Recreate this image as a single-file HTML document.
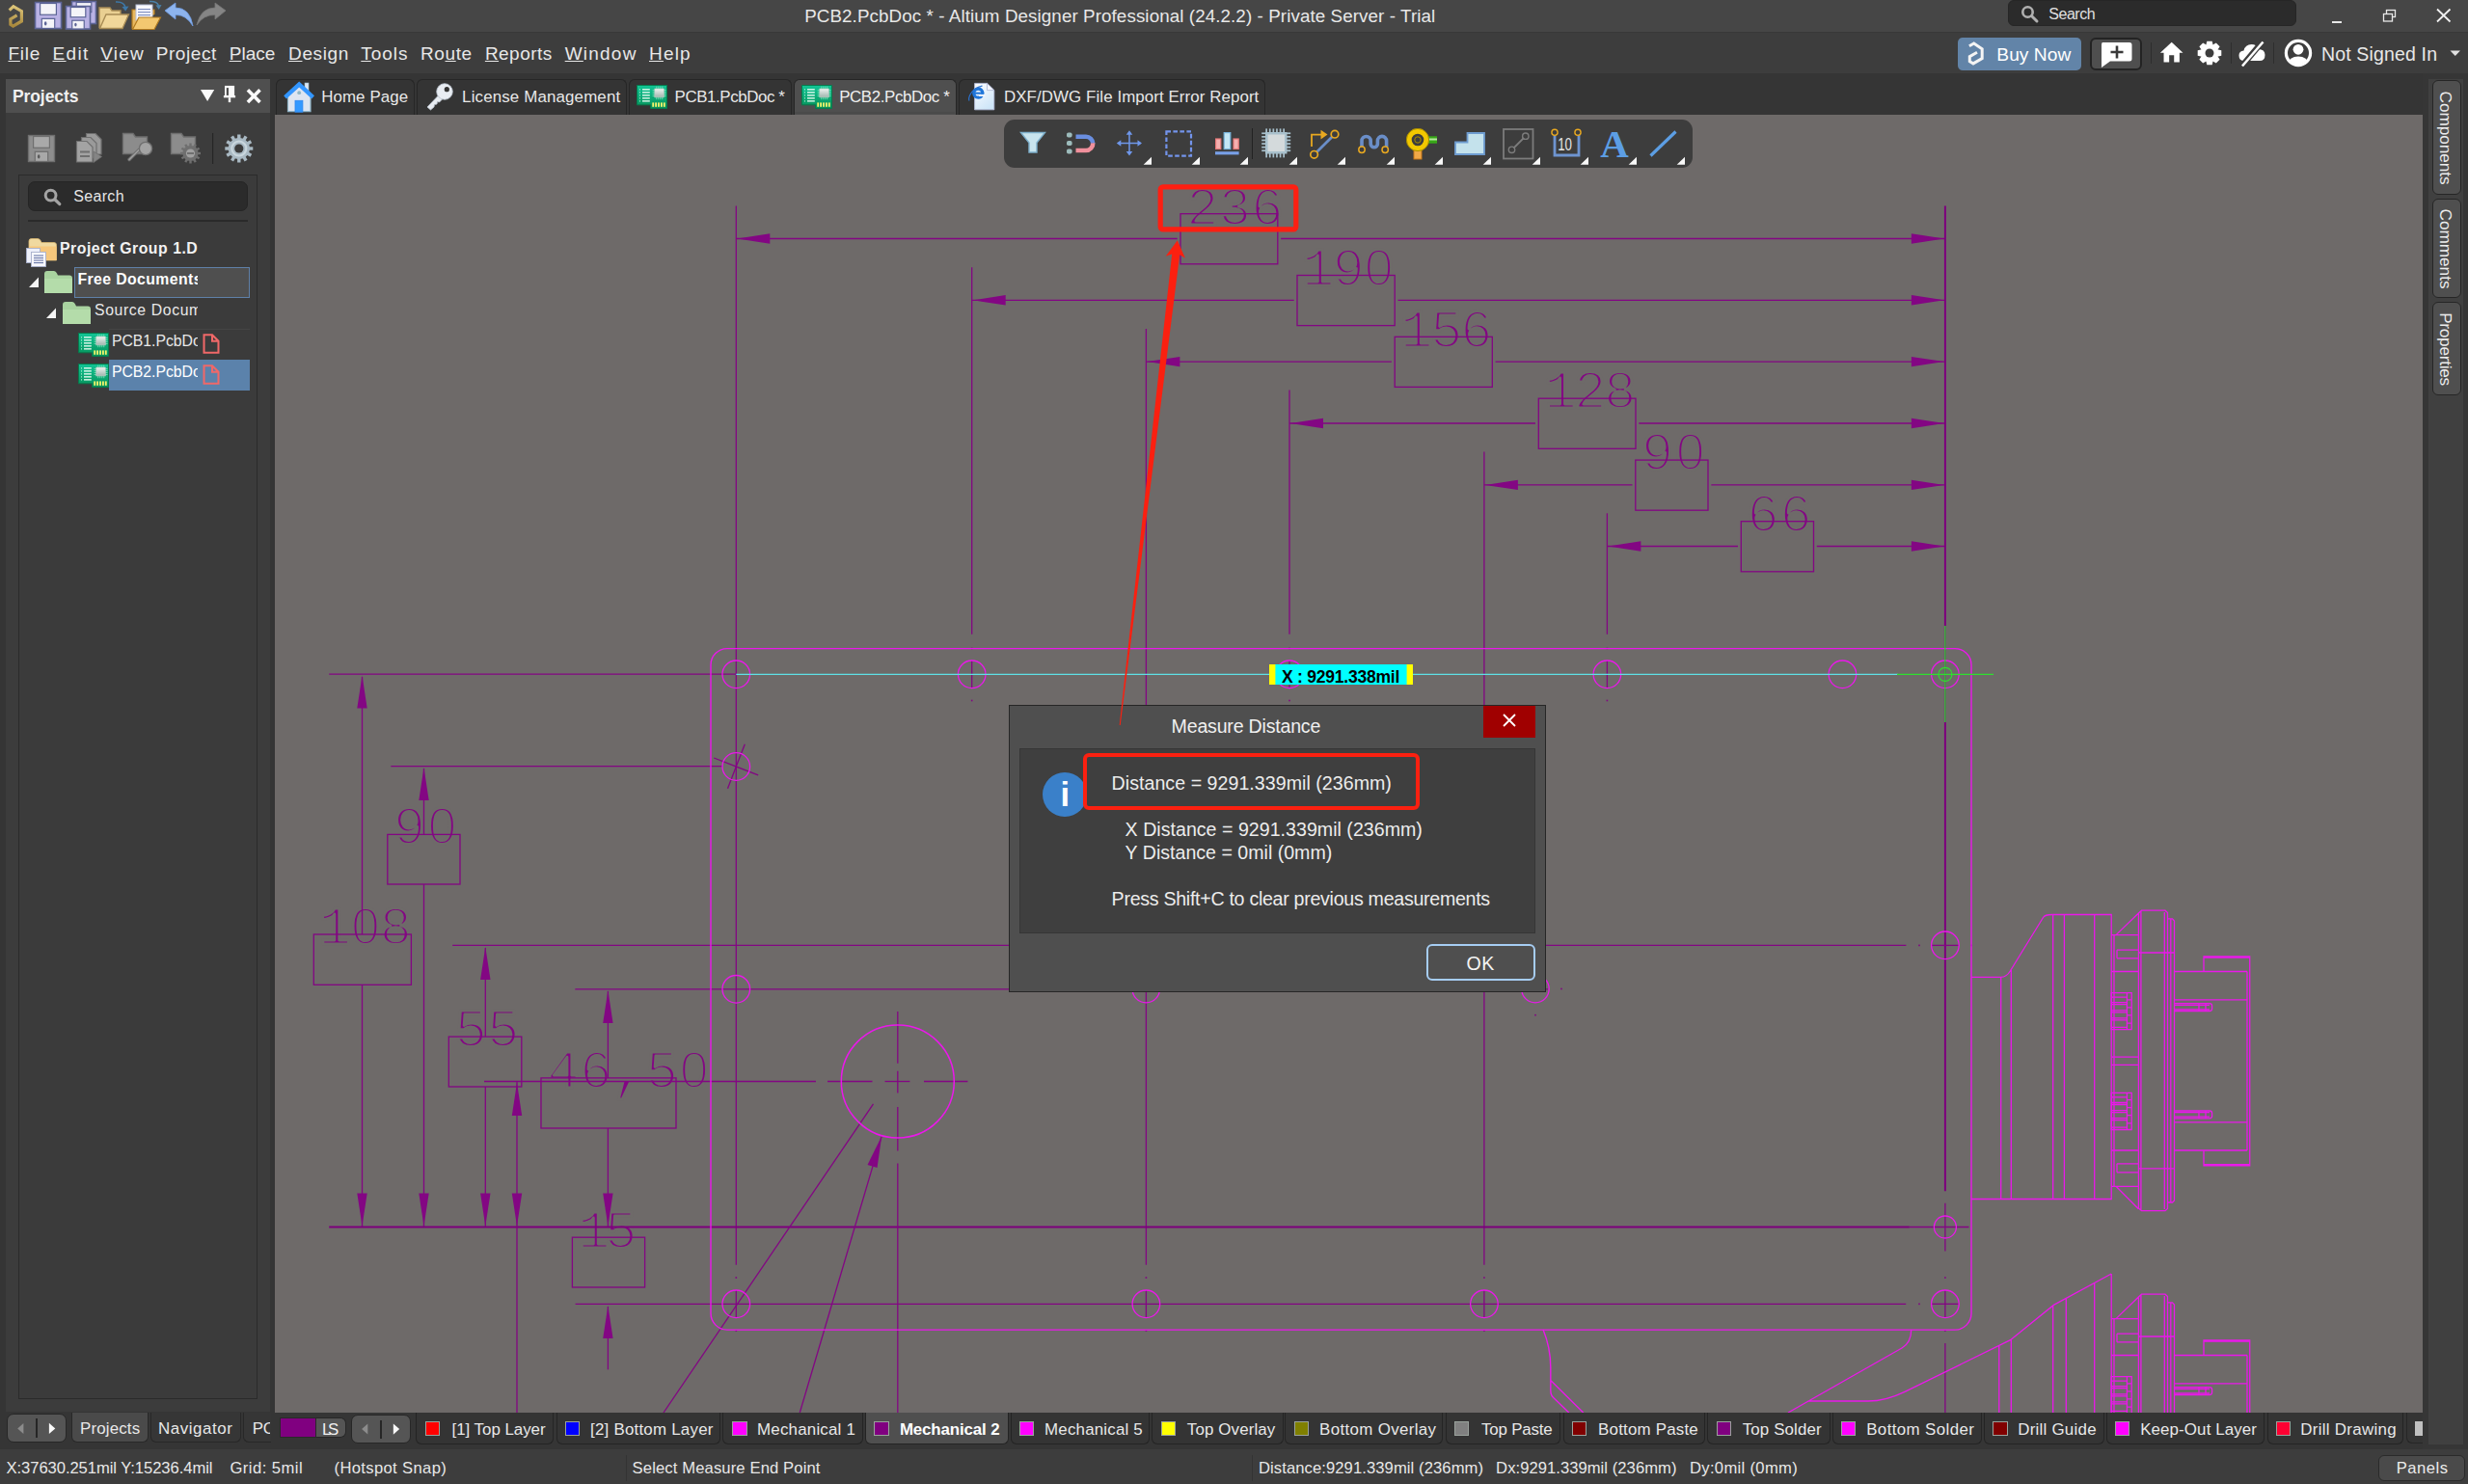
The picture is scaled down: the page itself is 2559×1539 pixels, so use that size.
<!DOCTYPE html>
<html><head><meta charset="utf-8"><title>PCB2.PcbDoc * - Altium Designer Professional (24.2.2)</title>
<style>
html,body{margin:0;padding:0;overflow:hidden}
body{width:2559px;height:1539px;position:relative;overflow:hidden;background:#353535;font-family:"Liberation Sans",sans-serif;-webkit-font-smoothing:antialiased}
div{box-sizing:border-box}
</style></head><body>
<div style="position:absolute;left:0;top:0;width:2559px;height:33px;background:#464646"></div>
<div style="position:absolute;left:0;top:33px;width:2559px;height:1px;background:#383838"></div>
<div style="position:absolute;left:0;top:34px;width:2559px;height:42px;background:#3d3d3d"></div>
<div style="position:absolute;left:0;top:76px;width:2559px;height:43px;background:#353535"></div>
<svg style="position:absolute;left:0;top:0" width="260" height="34" viewBox="0 0 260 34"><defs><linearGradient id="alg" x1="0" y1="0" x2="0" y2="1"><stop offset="0" stop-color="#dcc478"/><stop offset="1" stop-color="#a8883c"/></linearGradient></defs><path d="M9.7 10.7 L13.9 6.7 L22.4 11.7 V22 L13.6 27.1 L10.9 25.4 V19.9 L17.6 15.9" fill="none" stroke="url(#alg)" stroke-width="3.2" stroke-linejoin="miter"/><rect x="36.5" y="2.5" width="27" height="27" fill="#b9b2e4" stroke="#5c6496" stroke-width="1.6"/><rect x="41.6" y="3.5" width="16.8" height="11.76" fill="#f4f4f8" stroke="#5c6496" stroke-width="1.2"/><rect x="43.28" y="19.36" width="13.44" height="10.08" fill="#f4f4f8" stroke="#5c6496" stroke-width="1.2"/><ellipse cx="47.2" cy="24.400000000000002" rx="1.26" ry="2.1" fill="#5c6496"/><rect x="74.5" y="1.5" width="25" height="23" fill="#b9b2e4" stroke="#5c6496" stroke-width="1.6"/><rect x="79.2" y="2.5" width="15.6" height="10.08" fill="#f4f4f8" stroke="#5c6496" stroke-width="1.2"/><rect x="80.76" y="15.879999999999999" width="12.48" height="8.64" fill="#f4f4f8" stroke="#5c6496" stroke-width="1.2"/><ellipse cx="84.4" cy="20.200000000000003" rx="1.17" ry="1.7999999999999998" fill="#5c6496"/><rect x="68.5" y="6.5" width="25" height="23.5" fill="#b9b2e4" stroke="#5c6496" stroke-width="1.6"/><rect x="73.2" y="7.5" width="15.6" height="10.29" fill="#f4f4f8" stroke="#5c6496" stroke-width="1.2"/><rect x="74.76" y="21.189999999999998" width="12.48" height="8.82" fill="#f4f4f8" stroke="#5c6496" stroke-width="1.2"/><ellipse cx="78.4" cy="25.6" rx="1.17" ry="1.8375" fill="#5c6496"/><path d="M103 29 V8 H114 L116 11 H125 V15" fill="#e9cf92" stroke="#a88c55" stroke-width="1.4"/><path d="M103.5 29.5 L110 15 H133.5 L127 29.5 Z" fill="#f1d79a" stroke="#a88c55" stroke-width="1.4"/><path d="M120 2 Q129 1.5 130 8" fill="none" stroke="#3d78a8" stroke-width="1.6"/><path d="M126.5 7 L130.2 11.5 L133.5 6.5 Z" fill="#3d78a8"/><path d="M137 30 V10 H160 V15" fill="#e8b860" stroke="#b07a20" stroke-width="1.2"/><rect x="141" y="5" width="17" height="16" fill="#fafaff" stroke="#b8c0d8" stroke-width="1"/><rect x="143" y="9" width="13" height="1.2" fill="#8090c0"/><rect x="143" y="12" width="13" height="1.2" fill="#8090c0"/><rect x="143" y="15" width="13" height="1.2" fill="#8090c0"/><path d="M137.5 30.5 L144 18 H166.5 L160 30.5 Z" fill="#f3c870" stroke="#b07a20" stroke-width="1.2"/><path d="M155 1.5 Q163 1 164.5 6" fill="none" stroke="#4a80a8" stroke-width="1.4"/><path d="M161.5 5.5 L164.8 10 L167.5 5 Z" fill="#4a80a8"/><path d="M171 11 L182 3 V8 Q197 8 200 27 Q193 15 182 15.5 V20 Z" fill="#8db4ee" stroke="#6f9ae0" stroke-width="0.8"/><path d="M234 11 L223 3 V8 Q208 8 204 26 Q211 15 223 15.5 V20 Z" fill="#858585" stroke="#777" stroke-width="0.8"/></svg>
<div style="position:absolute;left:834.2px;top:5.1px;font-size:18.8px;line-height:24px;letter-spacing:0.09px;color:#e8e8e8;white-space:pre;">PCB2.PcbDoc * - Altium Designer Professional (24.2.2) - Private Server - Trial</div>
<div style="position:absolute;left:2082px;top:0px;width:299px;height:27px;background:#2b2b2b;border:1px solid #262626;box-sizing:border-box;border-radius:6px"></div>
<svg style="position:absolute;left:2094px;top:4px" width="22" height="22" viewBox="0 0 22 22"><circle cx="8.5" cy="8.5" r="5.2" fill="none" stroke="#b0b0b0" stroke-width="2.6"/><path d="M12.5 12.5 L18 18" stroke="#b0b0b0" stroke-width="3" stroke-linecap="round"/></svg>
<div style="position:absolute;left:2124.2px;top:4.4px;font-size:16px;line-height:21px;letter-spacing:-0.43px;color:#e0e0e0;white-space:pre;">Search</div>
<div style="position:absolute;left:2418px;top:22px;width:10px;height:1.5px;background:#e8e8e8"></div>
<svg style="position:absolute;left:2468px;top:7px" width="20" height="20" viewBox="0 0 20 20"><rect x="6.5" y="3.5" width="9" height="7" fill="none" stroke="#e8e8e8" stroke-width="1.3"/><rect x="3.5" y="7.5" width="9" height="7.5" fill="#464646" stroke="#e8e8e8" stroke-width="1.3"/></svg>
<svg style="position:absolute;left:2524px;top:6px" width="20" height="20" viewBox="0 0 20 20"><path d="M3 3.5 L16.5 16.5 M16.5 3.5 L3 16.5" stroke="#f0f0f0" stroke-width="1.8"/></svg>
<div style="position:absolute;left:8.5px;top:43.1px;font-size:19px;line-height:25px;letter-spacing:0.75px;color:#e8e8e8;white-space:pre;text-underline-offset:1.2px;text-decoration-thickness:1.4px;"><u>F</u>ile</div>
<div style="position:absolute;left:54.5px;top:43.1px;font-size:19px;line-height:25px;letter-spacing:1.37px;color:#e8e8e8;white-space:pre;text-underline-offset:1.2px;text-decoration-thickness:1.4px;"><u>E</u>dit</div>
<div style="position:absolute;left:104.3px;top:43.1px;font-size:19px;line-height:25px;letter-spacing:1.21px;color:#e8e8e8;white-space:pre;text-underline-offset:1.2px;text-decoration-thickness:1.4px;"><u>V</u>iew</div>
<div style="position:absolute;left:161.7px;top:43.1px;font-size:19px;line-height:25px;letter-spacing:0.59px;color:#e8e8e8;white-space:pre;text-underline-offset:1.2px;text-decoration-thickness:1.4px;">Proje<u>c</u>t</div>
<div style="position:absolute;left:237.7px;top:43.1px;font-size:19px;line-height:25px;letter-spacing:0.03px;color:#e8e8e8;white-space:pre;text-underline-offset:1.2px;text-decoration-thickness:1.4px;"><u>P</u>lace</div>
<div style="position:absolute;left:299.1px;top:43.1px;font-size:19px;line-height:25px;letter-spacing:0.62px;color:#e8e8e8;white-space:pre;text-underline-offset:1.2px;text-decoration-thickness:1.4px;"><u>D</u>esign</div>
<div style="position:absolute;left:374.3px;top:43.1px;font-size:19px;line-height:25px;letter-spacing:0.93px;color:#e8e8e8;white-space:pre;text-underline-offset:1.2px;text-decoration-thickness:1.4px;"><u>T</u>ools</div>
<div style="position:absolute;left:436.0px;top:43.1px;font-size:19px;line-height:25px;letter-spacing:0.61px;color:#e8e8e8;white-space:pre;text-underline-offset:1.2px;text-decoration-thickness:1.4px;">Ro<u>u</u>te</div>
<div style="position:absolute;left:502.9px;top:43.1px;font-size:19px;line-height:25px;letter-spacing:0.46px;color:#e8e8e8;white-space:pre;text-underline-offset:1.2px;text-decoration-thickness:1.4px;"><u>R</u>eports</div>
<div style="position:absolute;left:585.7px;top:43.1px;font-size:19px;line-height:25px;letter-spacing:1.22px;color:#e8e8e8;white-space:pre;text-underline-offset:1.2px;text-decoration-thickness:1.4px;"><u>W</u>indow</div>
<div style="position:absolute;left:673.0px;top:43.1px;font-size:19px;line-height:25px;letter-spacing:1.19px;color:#e8e8e8;white-space:pre;text-underline-offset:1.2px;text-decoration-thickness:1.4px;"><u>H</u>elp</div>
<div style="position:absolute;left:2030px;top:39px;width:128px;height:34px;background:#6284a8;border-radius:5px"></div>
<svg style="position:absolute;left:2038px;top:43px" width="22" height="26" viewBox="0 0 22 26"><path d="M3.9 4.8 L8.7 2 L17.2 7.7 V17.6 L8 22.9 L4.3 20.7 V15.6 L12 11.2" fill="none" stroke="#f4f4f4" stroke-width="3"/></svg>
<div style="position:absolute;left:2070.3px;top:44.1px;font-size:19.2px;line-height:25px;letter-spacing:0.04px;color:#ffffff;white-space:pre;">Buy Now</div>
<div style="position:absolute;left:2167px;top:39px;width:54px;height:34px;background:#4f4f4f;border:2px solid #232323;box-sizing:border-box;border-radius:6px"></div>
<svg style="position:absolute;left:2176px;top:42px" width="38" height="30" viewBox="0 0 38 30"><path d="M4 2 H32 Q34.5 2 34.5 4.5 V19 Q34.5 21.5 32 21.5 H12 L3 28 V4.5 Q3 2 4 2 Z" fill="#ffffff"/><path d="M12.5 12 H25.5 M19 5.5 V18.5" stroke="#3a3a3a" stroke-width="2.6"/></svg>
<div style="position:absolute;left:2230px;top:44px;width:1px;height:22px;background:#2e2e2e"></div>
<div style="position:absolute;left:2313px;top:44px;width:1px;height:22px;background:#2e2e2e"></div>
<div style="position:absolute;left:2357px;top:44px;width:1px;height:22px;background:#2e2e2e"></div>
<svg style="position:absolute;left:2239.4px;top:42.4px" width="25.4" height="24.4" viewBox="0 0 28 26"><path d="M14 1.5 L27 13.5 H23 V24.5 H16.8 V16.5 H11.2 V24.5 H5 V13.5 H1 Z" fill="#ffffff"/></svg>
<svg style="position:absolute;left:2277px;top:41px" width="28" height="28" viewBox="-14 -14 28 28"><path d="M-2.7 -12.3 H2.7 L3.9 -7 H-3.9 Z" fill="#fff" transform="rotate(0)"/><path d="M-2.7 -12.3 H2.7 L3.9 -7 H-3.9 Z" fill="#fff" transform="rotate(45)"/><path d="M-2.7 -12.3 H2.7 L3.9 -7 H-3.9 Z" fill="#fff" transform="rotate(90)"/><path d="M-2.7 -12.3 H2.7 L3.9 -7 H-3.9 Z" fill="#fff" transform="rotate(135)"/><path d="M-2.7 -12.3 H2.7 L3.9 -7 H-3.9 Z" fill="#fff" transform="rotate(180)"/><path d="M-2.7 -12.3 H2.7 L3.9 -7 H-3.9 Z" fill="#fff" transform="rotate(225)"/><path d="M-2.7 -12.3 H2.7 L3.9 -7 H-3.9 Z" fill="#fff" transform="rotate(270)"/><path d="M-2.7 -12.3 H2.7 L3.9 -7 H-3.9 Z" fill="#fff" transform="rotate(315)"/><circle r="8.9" fill="#fff"/><circle r="4.5" fill="#3d3d3d"/></svg>
<svg style="position:absolute;left:2319px;top:41px" width="32" height="30" viewBox="0 0 32 30"><path d="M8 22 Q2.5 22 2.5 16.5 Q2.5 12 7.5 11.5 Q9 5 15.5 5 Q21 5 22.5 10 Q29.5 10 29.5 16 Q29.5 22 24 22 Z" fill="#fff"/><path d="M27 2 L6 27" stroke="#3d3d3d" stroke-width="6"/><path d="M27.5 2.5 L6 27.5" stroke="#fff" stroke-width="2.6"/></svg>
<svg style="position:absolute;left:2368px;top:40px" width="30" height="30" viewBox="0 0 30 30"><defs><clipPath id="acc"><circle cx="15" cy="15" r="11.6"/></clipPath></defs><circle cx="15" cy="15" r="12.6" fill="none" stroke="#fff" stroke-width="3.2"/><circle cx="15" cy="11.3" r="5.4" fill="#fff"/><ellipse cx="15" cy="26.5" rx="10.8" ry="8" fill="#fff" clip-path="url(#acc)"/></svg>
<div style="position:absolute;left:2406.9px;top:44.0px;font-size:19.5px;line-height:25px;letter-spacing:0.16px;color:#e8e8e8;white-space:pre;">Not Signed In</div>
<svg style="position:absolute;left:2540px;top:52px" width="12" height="7" viewBox="0 0 12 7"><path d="M0.5 0.5 H11 L5.75 6 Z" fill="#e0e0e0"/></svg>
<div style="position:absolute;left:286px;top:82px;width:144px;height:37px;background:#343434;border:1.5px solid #262626;border-bottom:none;box-sizing:border-box;border-radius:6px 6px 0 0"></div>
<div style="position:absolute;left:432px;top:82px;width:218px;height:37px;background:#343434;border:1.5px solid #262626;border-bottom:none;box-sizing:border-box;border-radius:6px 6px 0 0"></div>
<div style="position:absolute;left:652px;top:82px;width:169px;height:37px;background:#343434;border:1.5px solid #262626;border-bottom:none;box-sizing:border-box;border-radius:6px 6px 0 0"></div>
<div style="position:absolute;left:823px;top:82px;width:169px;height:37px;background:#4f4f4f;border:1.5px solid #262626;border-bottom:none;box-sizing:border-box;border-radius:6px 6px 0 0"></div>
<div style="position:absolute;left:994px;top:82px;width:318px;height:37px;background:#343434;border:1.5px solid #262626;border-bottom:none;box-sizing:border-box;border-radius:6px 6px 0 0"></div>
<div style="position:absolute;left:824px;top:116px;width:166px;height:2px;background:#4a4a4a"></div>
<svg style="position:absolute;left:293px;top:84px" width="34" height="34" viewBox="0 0 34 34"><rect x="23" y="2" width="4" height="10" fill="#dbe6f2" stroke="#9bbccc" stroke-width="0.6"/><path d="M5.5 15 V31.6 H29 V15 L17.2 5 Z" fill="#dde5f1" stroke="#8fb3c6" stroke-width="1.2"/><circle cx="17.2" cy="12.2" r="1.9" fill="#8fb6c6"/><rect x="13" y="20.3" width="7.9" height="11.9" fill="#3399ff" stroke="#2f86ee" stroke-width="0.8"/><path d="M1.2 15.2 L17.2 0.6 L33 15.2 L30.2 18.6 L17.2 6.6 L4 18.6 Z" fill="#3396ff"/></svg>
<div style="position:absolute;left:333.2px;top:90.2px;font-size:16.9px;line-height:22px;letter-spacing:0.09px;color:#e8e8e8;white-space:pre;">Home Page</div>
<svg style="position:absolute;left:440px;top:85px" width="32" height="32" viewBox="0 0 32 32"><path d="M3 26 L15 13.5 L19 17.5 L15.5 21 L13.5 20.5 L13 23 L10.5 23.5 L10 26 L6.5 29 Z" fill="#e8ecf2" stroke="#b8c0cc" stroke-width="0.8"/><circle cx="21" cy="10" r="8.3" fill="#e8ecf2" stroke="#b8c0cc" stroke-width="0.8"/><circle cx="23.3" cy="7.7" r="2.6" fill="#343434"/></svg>
<div style="position:absolute;left:479.1px;top:90.2px;font-size:16.9px;line-height:22px;letter-spacing:0.15px;color:#e8e8e8;white-space:pre;">License Management</div>
<svg style="position:absolute;left:660px;top:88px" width="33" height="26" viewBox="0 0 33 26"><defs><linearGradient id="pg1" x1="0" y1="0" x2="0" y2="1"><stop offset="0" stop-color="#12c596"/><stop offset="1" stop-color="#069058"/></linearGradient><linearGradient id="cg1" x1="0" y1="0" x2="0" y2="1"><stop offset="0" stop-color="#eef2f0"/><stop offset="1" stop-color="#9fb5ae"/></linearGradient></defs><path d="M0.5 0.5 H31.5 V24.5 H14.6 V20.8 H0.5 Z" fill="url(#pg1)" stroke="#067a4c" stroke-width="1"/><rect x="6" y="4.2" width="7.8" height="1.3" fill="#f2fff8"/><rect x="3" y="4.4" width="1" height="1" fill="#d8ffe8"/><rect x="6" y="7.2" width="7.8" height="1.3" fill="#f2fff8"/><rect x="3" y="7.4" width="1" height="1" fill="#d8ffe8"/><rect x="6" y="10.2" width="7.8" height="1.3" fill="#f2fff8"/><rect x="3" y="10.4" width="1" height="1" fill="#d8ffe8"/><rect x="6" y="13.2" width="7.8" height="1.3" fill="#f2fff8"/><rect x="3" y="13.4" width="1" height="1" fill="#d8ffe8"/><rect x="6" y="16.2" width="7.8" height="1.3" fill="#f2fff8"/><rect x="3" y="16.4" width="1" height="1" fill="#d8ffe8"/><rect x="20.4" y="1.6" width="0.8" height="13.6" fill="#7fe0b8"/><rect x="16.6" y="5" width="14" height="0.8" fill="#7fe0b8"/><rect x="22.4" y="1.6" width="0.8" height="13.6" fill="#7fe0b8"/><rect x="16.6" y="7" width="14" height="0.8" fill="#7fe0b8"/><rect x="24.4" y="1.6" width="0.8" height="13.6" fill="#7fe0b8"/><rect x="16.6" y="9" width="14" height="0.8" fill="#7fe0b8"/><rect x="26.4" y="1.6" width="0.8" height="13.6" fill="#7fe0b8"/><rect x="16.6" y="11" width="14" height="0.8" fill="#7fe0b8"/><rect x="18.8" y="4" width="9.5" height="8.9" fill="url(#cg1)" stroke="#b8ccc4" stroke-width="0.6"/><rect x="16.3" y="18.4" width="1.8" height="4.4" fill="#f6f66c"/><rect x="19.2" y="18.4" width="1.8" height="4.4" fill="#f6f66c"/><rect x="22.1" y="18.4" width="1.8" height="4.4" fill="#f6f66c"/><rect x="25.0" y="18.4" width="1.8" height="4.4" fill="#f6f66c"/><rect x="27.9" y="18.4" width="1.8" height="4.4" fill="#f6f66c"/></svg>
<div style="position:absolute;left:699.6px;top:90.2px;font-size:16.9px;line-height:22px;letter-spacing:-0.42px;color:#e8e8e8;white-space:pre;">PCB1.PcbDoc *</div>
<svg style="position:absolute;left:831px;top:88px" width="33" height="26" viewBox="0 0 33 26"><defs><linearGradient id="pg2" x1="0" y1="0" x2="0" y2="1"><stop offset="0" stop-color="#12c596"/><stop offset="1" stop-color="#069058"/></linearGradient><linearGradient id="cg2" x1="0" y1="0" x2="0" y2="1"><stop offset="0" stop-color="#eef2f0"/><stop offset="1" stop-color="#9fb5ae"/></linearGradient></defs><path d="M0.5 0.5 H31.5 V24.5 H14.6 V20.8 H0.5 Z" fill="url(#pg2)" stroke="#067a4c" stroke-width="1"/><rect x="6" y="4.2" width="7.8" height="1.3" fill="#f2fff8"/><rect x="3" y="4.4" width="1" height="1" fill="#d8ffe8"/><rect x="6" y="7.2" width="7.8" height="1.3" fill="#f2fff8"/><rect x="3" y="7.4" width="1" height="1" fill="#d8ffe8"/><rect x="6" y="10.2" width="7.8" height="1.3" fill="#f2fff8"/><rect x="3" y="10.4" width="1" height="1" fill="#d8ffe8"/><rect x="6" y="13.2" width="7.8" height="1.3" fill="#f2fff8"/><rect x="3" y="13.4" width="1" height="1" fill="#d8ffe8"/><rect x="6" y="16.2" width="7.8" height="1.3" fill="#f2fff8"/><rect x="3" y="16.4" width="1" height="1" fill="#d8ffe8"/><rect x="20.4" y="1.6" width="0.8" height="13.6" fill="#7fe0b8"/><rect x="16.6" y="5" width="14" height="0.8" fill="#7fe0b8"/><rect x="22.4" y="1.6" width="0.8" height="13.6" fill="#7fe0b8"/><rect x="16.6" y="7" width="14" height="0.8" fill="#7fe0b8"/><rect x="24.4" y="1.6" width="0.8" height="13.6" fill="#7fe0b8"/><rect x="16.6" y="9" width="14" height="0.8" fill="#7fe0b8"/><rect x="26.4" y="1.6" width="0.8" height="13.6" fill="#7fe0b8"/><rect x="16.6" y="11" width="14" height="0.8" fill="#7fe0b8"/><rect x="18.8" y="4" width="9.5" height="8.9" fill="url(#cg2)" stroke="#b8ccc4" stroke-width="0.6"/><rect x="16.3" y="18.4" width="1.8" height="4.4" fill="#f6f66c"/><rect x="19.2" y="18.4" width="1.8" height="4.4" fill="#f6f66c"/><rect x="22.1" y="18.4" width="1.8" height="4.4" fill="#f6f66c"/><rect x="25.0" y="18.4" width="1.8" height="4.4" fill="#f6f66c"/><rect x="27.9" y="18.4" width="1.8" height="4.4" fill="#f6f66c"/></svg>
<div style="position:absolute;left:870.2px;top:90.2px;font-size:16.9px;line-height:22px;letter-spacing:-0.39px;color:#f0f0f0;white-space:pre;">PCB2.PcbDoc *</div>
<svg style="position:absolute;left:1004px;top:84px" width="30" height="32" viewBox="0 0 30 32"><defs><linearGradient id="dxg" x1="0" y1="0" x2="0.6" y2="1"><stop offset="0" stop-color="#fdfdff"/><stop offset="1" stop-color="#cfe6f8"/></linearGradient></defs><path d="M6.6 2.4 H19.5 L26.8 9.6 V29.8 H6.6 Z" fill="url(#dxg)" stroke="#b4bcd8" stroke-width="0.9"/><path d="M19.5 2.4 V9.6 H26.8 Z" fill="#f4f6ff" stroke="#b4bcd8" stroke-width="0.9"/><circle cx="10.3" cy="12.7" r="4.5" fill="none" stroke="#1f76da" stroke-width="3.3"/><rect x="11" y="13.6" width="6.2" height="2.3" fill="#f2f6fd"/><rect x="5.6" y="11.6" width="10.6" height="2.1" fill="#1f76da"/><path d="M1 20.5 Q-0.5 17 4 11 Q8 6 14.5 5.2" fill="none" stroke="#2a72d0" stroke-width="1.2"/></svg>
<div style="position:absolute;left:1041.0px;top:90.2px;font-size:16.9px;line-height:22px;letter-spacing:0.08px;color:#e8e8e8;white-space:pre;">DXF/DWG File Import Error Report</div>
<div style="position:absolute;left:6px;top:82px;width:274px;height:1382px;background:#3c3c3c"></div>
<div style="position:absolute;left:0;top:76px;width:6px;height:1388px;background:#353535"></div>
<div style="position:absolute;left:6px;top:82px;width:274px;height:35px;background:#4f4f4f"></div>
<div style="position:absolute;left:12.9px;top:88.5px;font-size:17.5px;line-height:23px;letter-spacing:-0.07px;color:#f0f0f0;white-space:pre;font-weight:700;">Projects</div>
<svg style="position:absolute;left:205px;top:86px" width="70" height="24" viewBox="0 0 70 24"><path d="M3 7 H17.2 L10.1 18.9 Z" fill="#fafafa"/><rect x="28" y="2.9" width="10.1" height="10.2" fill="#fafafa"/><rect x="29.8" y="5.1" width="2.2" height="7.8" fill="#4f4f4f"/><rect x="26.9" y="13" width="12.2" height="2.3" fill="#fafafa"/><rect x="31.8" y="15.2" width="2.4" height="4.9" fill="#fafafa"/><path d="M51.9 7.3 L64.5 19.9 M64.5 7.3 L51.9 19.9" stroke="#fafafa" stroke-width="3.6"/></svg>
<svg style="position:absolute;left:20px;top:132px" width="250" height="44" viewBox="20 132 250 44"><rect x="29.5" y="140.5" width="27" height="27" fill="#8e8e8e" stroke="#6f6f6f" stroke-width="1.4"/><rect x="34.6" y="141.5" width="16.8" height="11.76" fill="#a9a9a9" stroke="#6f6f6f" stroke-width="1.2"/><rect x="36.28" y="157.36" width="13.44" height="10.08" fill="#a9a9a9" stroke="#6f6f6f" stroke-width="1.2"/><ellipse cx="40.2" cy="162.4" rx="1.26" ry="2.1" fill="#5a5a5a"/><path d="M89.5 138.5 H99 L105 144.5 V160 H89.5 Z" fill="#9a9a9a" stroke="#6f6f6f" stroke-width="1.2"/><path d="M84.5 142.5 H94 L100 148.5 V164 H84.5 Z" fill="#9a9a9a" stroke="#6f6f6f" stroke-width="1.2"/><path d="M79.5 146.5 H90 L96 152.5 V168 H79.5 Z" fill="#a3a3a3" stroke="#6f6f6f" stroke-width="1.2"/><rect x="83" y="156.5" width="10" height="2" fill="#6f6f6f"/><rect x="83" y="161" width="10" height="2" fill="#6f6f6f"/><path d="M97 157 L105.5 162.5 L97 168.5 Z" fill="#858585" stroke="#6f6f6f" stroke-width="0.8"/><path d="M127.5 159.5 V138.5 H138 L140.5 142 H152.5 V159.5 Z" fill="#8c8c8c" stroke="#6f6f6f" stroke-width="1.4"/><path d="M134 165.5 L144 155.5" stroke="#6f6f6f" stroke-width="3.4" stroke-linecap="round"/><path d="M134 165.5 L144 155.5" stroke="#a0a0a0" stroke-width="1.4" stroke-linecap="round"/><circle cx="151" cy="154" r="6.6" fill="#a3a3a3" stroke="#6f6f6f" stroke-width="1.4"/><path d="M177.5 159.5 V138.5 H188 L190.5 142 H202.5 V159.5 Z" fill="#8c8c8c" stroke="#6f6f6f" stroke-width="1.4"/><g transform="translate(197.5 159)"><rect x="-1.2" y="-10.5" width="2.4" height="4" fill="#6f6f6f" transform="rotate(0.0)"/><rect x="-1.2" y="-10.5" width="2.4" height="4" fill="#6f6f6f" transform="rotate(30.0)"/><rect x="-1.2" y="-10.5" width="2.4" height="4" fill="#6f6f6f" transform="rotate(60.0)"/><rect x="-1.2" y="-10.5" width="2.4" height="4" fill="#6f6f6f" transform="rotate(90.0)"/><rect x="-1.2" y="-10.5" width="2.4" height="4" fill="#6f6f6f" transform="rotate(120.0)"/><rect x="-1.2" y="-10.5" width="2.4" height="4" fill="#6f6f6f" transform="rotate(150.0)"/><rect x="-1.2" y="-10.5" width="2.4" height="4" fill="#6f6f6f" transform="rotate(180.0)"/><rect x="-1.2" y="-10.5" width="2.4" height="4" fill="#6f6f6f" transform="rotate(210.0)"/><rect x="-1.2" y="-10.5" width="2.4" height="4" fill="#6f6f6f" transform="rotate(240.0)"/><rect x="-1.2" y="-10.5" width="2.4" height="4" fill="#6f6f6f" transform="rotate(270.0)"/><rect x="-1.2" y="-10.5" width="2.4" height="4" fill="#6f6f6f" transform="rotate(300.0)"/><rect x="-1.2" y="-10.5" width="2.4" height="4" fill="#6f6f6f" transform="rotate(330.0)"/><circle r="8.1" fill="#6f6f6f"/><circle r="4.6" fill="#a0a0a0"/></g><rect x="194" y="158" width="7" height="2" fill="#6f6f6f"/><rect x="220" y="138" width="1.2" height="32" fill="#262626"/><g transform="translate(247.8 154)"><rect x="-1.7" y="-14.5" width="3.4" height="5" fill="#a9b9c3" transform="rotate(0.0)"/><rect x="-1.7" y="-14.5" width="3.4" height="5" fill="#a9b9c3" transform="rotate(30.0)"/><rect x="-1.7" y="-14.5" width="3.4" height="5" fill="#a9b9c3" transform="rotate(60.0)"/><rect x="-1.7" y="-14.5" width="3.4" height="5" fill="#a9b9c3" transform="rotate(90.0)"/><rect x="-1.7" y="-14.5" width="3.4" height="5" fill="#a9b9c3" transform="rotate(120.0)"/><rect x="-1.7" y="-14.5" width="3.4" height="5" fill="#a9b9c3" transform="rotate(150.0)"/><rect x="-1.7" y="-14.5" width="3.4" height="5" fill="#a9b9c3" transform="rotate(180.0)"/><rect x="-1.7" y="-14.5" width="3.4" height="5" fill="#a9b9c3" transform="rotate(210.0)"/><rect x="-1.7" y="-14.5" width="3.4" height="5" fill="#a9b9c3" transform="rotate(240.0)"/><rect x="-1.7" y="-14.5" width="3.4" height="5" fill="#a9b9c3" transform="rotate(270.0)"/><rect x="-1.7" y="-14.5" width="3.4" height="5" fill="#a9b9c3" transform="rotate(300.0)"/><rect x="-1.7" y="-14.5" width="3.4" height="5" fill="#a9b9c3" transform="rotate(330.0)"/><circle r="11.1" fill="#a9b9c3"/><circle r="4.6" fill="#3c3c3c"/></g><circle cx="247.8" cy="154" r="7.5" fill="none" stroke="#c9d6dd" stroke-width="2.2"/></svg>
<div style="position:absolute;left:19px;top:181px;width:248px;height:1270px;border:1.5px solid #2b2b2b;box-sizing:border-box;background:#3b3b3b"></div>
<div style="position:absolute;left:29px;top:188px;width:228px;height:31px;background:#2b2b2b;border:1.5px solid #252525;box-sizing:border-box;border-radius:7px"></div>
<svg style="position:absolute;left:44px;top:194px" width="22" height="22" viewBox="0 0 22 22"><circle cx="8.6" cy="8.6" r="5.4" fill="none" stroke="#a4a4a4" stroke-width="3"/><path d="M13 13 L17.8 17.6" stroke="#a4a4a4" stroke-width="3.2" stroke-linecap="round"/></svg>
<div style="position:absolute;left:76.3px;top:193.3px;font-size:16px;line-height:21px;letter-spacing:0.31px;color:#e6e6e6;white-space:pre;">Search</div>
<div style="position:absolute;left:29px;top:228px;width:228px;height:1.5px;background:#2a2a2a"></div>
<svg style="position:absolute;left:26px;top:246px" width="34" height="32" viewBox="0 0 34 32"><path d="M4 24 V4 Q4 1.5 6.5 1.5 H13 Q15 1.5 16 3.5 L17 5.5 H30 Q32.5 5.5 32.5 8 V24 Z" fill="#f0d9a0" stroke="#d9b872" stroke-width="0.8"/><path d="M4 24 V9.5 H32.5 V24 Z" fill="#f6c77c"/><rect x="1.5" y="11.5" width="14" height="15" fill="#eef0fa" stroke="#a8b0cc" stroke-width="0.9"/><rect x="6.5" y="15.5" width="15" height="15" fill="#f6f7fd" stroke="#a8b0cc" stroke-width="0.9"/><rect x="9" y="18.5" width="10" height="1.1" fill="#6a78a8"/><rect x="9" y="21" width="10" height="1.1" fill="#6a78a8"/><rect x="9" y="23.5" width="10" height="1.1" fill="#6a78a8"/><rect x="9" y="26" width="10" height="1.1" fill="#6a78a8"/></svg>
<div style="position:absolute;left:62.0px;top:247.4px;font-size:15.8px;line-height:21px;letter-spacing:0.00px;color:#f2f2f2;white-space:pre;font-weight:700;width:143.2px;overflow:hidden;letter-spacing:0.53px;">Project Group 1.D</div>
<svg style="position:absolute;left:29px;top:286px" width="12" height="13" viewBox="0 0 12 13"><path d="M11 1.5 V12 H1 Z" fill="#f4f4f4"/></svg>
<svg style="position:absolute;left:45px;top:280px" width="31" height="25" viewBox="0 0 31 25"><path d="M1 24 V4 Q1 1 4 1 H11 Q13 1 14 3.5 L15 5.5 H27 Q30 5.5 30 8.5 V24 Z" fill="#a9d3a0"/><path d="M1 24 V9 H30 V24 Z" fill="#b4dcaa"/></svg>
<div style="position:absolute;left:77px;top:277px;width:182px;height:32px;background:#4f4f4f;border:1.5px solid #5f80a8;box-sizing:border-box"></div>
<div style="position:absolute;left:80.4px;top:279.2px;font-size:15.8px;line-height:21px;letter-spacing:0.00px;color:#ffffff;white-space:pre;font-weight:700;width:124.8px;overflow:hidden;letter-spacing:0.41px;">Free Documents</div>
<svg style="position:absolute;left:47px;top:318px" width="12" height="13" viewBox="0 0 12 13"><path d="M11 1.5 V12 H1 Z" fill="#f4f4f4"/></svg>
<svg style="position:absolute;left:63.5px;top:312px" width="31" height="25" viewBox="0 0 31 25"><path d="M1 24 V4 Q1 1 4 1 H11 Q13 1 14 3.5 L15 5.5 H27 Q30 5.5 30 8.5 V24 Z" fill="#a9d3a0"/><path d="M1 24 V9 H30 V24 Z" fill="#b4dcaa"/></svg>
<div style="position:absolute;left:98.1px;top:311.1px;font-size:15.8px;line-height:21px;letter-spacing:0.00px;color:#e8e8e8;white-space:pre;width:107.1px;overflow:hidden;letter-spacing:0.60px;">Source Docum</div>
<div style="position:absolute;left:113px;top:341px;width:146px;height:1px;background:#444"></div>
<svg style="position:absolute;left:81px;top:345px" width="33" height="26" viewBox="0 0 33 26"><defs><linearGradient id="pg3" x1="0" y1="0" x2="0" y2="1"><stop offset="0" stop-color="#12c596"/><stop offset="1" stop-color="#069058"/></linearGradient><linearGradient id="cg3" x1="0" y1="0" x2="0" y2="1"><stop offset="0" stop-color="#eef2f0"/><stop offset="1" stop-color="#9fb5ae"/></linearGradient></defs><path d="M0.5 0.5 H31.5 V24.5 H14.6 V20.8 H0.5 Z" fill="url(#pg3)" stroke="#067a4c" stroke-width="1"/><rect x="6" y="4.2" width="7.8" height="1.3" fill="#f2fff8"/><rect x="3" y="4.4" width="1" height="1" fill="#d8ffe8"/><rect x="6" y="7.2" width="7.8" height="1.3" fill="#f2fff8"/><rect x="3" y="7.4" width="1" height="1" fill="#d8ffe8"/><rect x="6" y="10.2" width="7.8" height="1.3" fill="#f2fff8"/><rect x="3" y="10.4" width="1" height="1" fill="#d8ffe8"/><rect x="6" y="13.2" width="7.8" height="1.3" fill="#f2fff8"/><rect x="3" y="13.4" width="1" height="1" fill="#d8ffe8"/><rect x="6" y="16.2" width="7.8" height="1.3" fill="#f2fff8"/><rect x="3" y="16.4" width="1" height="1" fill="#d8ffe8"/><rect x="20.4" y="1.6" width="0.8" height="13.6" fill="#7fe0b8"/><rect x="16.6" y="5" width="14" height="0.8" fill="#7fe0b8"/><rect x="22.4" y="1.6" width="0.8" height="13.6" fill="#7fe0b8"/><rect x="16.6" y="7" width="14" height="0.8" fill="#7fe0b8"/><rect x="24.4" y="1.6" width="0.8" height="13.6" fill="#7fe0b8"/><rect x="16.6" y="9" width="14" height="0.8" fill="#7fe0b8"/><rect x="26.4" y="1.6" width="0.8" height="13.6" fill="#7fe0b8"/><rect x="16.6" y="11" width="14" height="0.8" fill="#7fe0b8"/><rect x="18.8" y="4" width="9.5" height="8.9" fill="url(#cg3)" stroke="#b8ccc4" stroke-width="0.6"/><rect x="16.3" y="18.4" width="1.8" height="4.4" fill="#f6f66c"/><rect x="19.2" y="18.4" width="1.8" height="4.4" fill="#f6f66c"/><rect x="22.1" y="18.4" width="1.8" height="4.4" fill="#f6f66c"/><rect x="25.0" y="18.4" width="1.8" height="4.4" fill="#f6f66c"/><rect x="27.9" y="18.4" width="1.8" height="4.4" fill="#f6f66c"/></svg>
<div style="position:absolute;left:116.0px;top:342.9px;font-size:15.8px;line-height:21px;letter-spacing:0.00px;color:#e8e8e8;white-space:pre;width:89.2px;overflow:hidden;letter-spacing:-0.04px;">PCB1.PcbDo</div>
<svg style="position:absolute;left:210px;top:346px" width="18" height="21" viewBox="0 0 17 20.5"><path d="M1.2 1.2 H9.5 L15.8 7.5 V19.3 H1.2 Z M9.5 1.2 V7.5 H15.8" fill="none" stroke="#f06868" stroke-width="2"/></svg>
<div style="position:absolute;left:113px;top:373px;width:146px;height:32px;background:#5b82ab"></div>
<svg style="position:absolute;left:81px;top:377px" width="33" height="26" viewBox="0 0 33 26"><defs><linearGradient id="pg4" x1="0" y1="0" x2="0" y2="1"><stop offset="0" stop-color="#12c596"/><stop offset="1" stop-color="#069058"/></linearGradient><linearGradient id="cg4" x1="0" y1="0" x2="0" y2="1"><stop offset="0" stop-color="#eef2f0"/><stop offset="1" stop-color="#9fb5ae"/></linearGradient></defs><path d="M0.5 0.5 H31.5 V24.5 H14.6 V20.8 H0.5 Z" fill="url(#pg4)" stroke="#067a4c" stroke-width="1"/><rect x="6" y="4.2" width="7.8" height="1.3" fill="#f2fff8"/><rect x="3" y="4.4" width="1" height="1" fill="#d8ffe8"/><rect x="6" y="7.2" width="7.8" height="1.3" fill="#f2fff8"/><rect x="3" y="7.4" width="1" height="1" fill="#d8ffe8"/><rect x="6" y="10.2" width="7.8" height="1.3" fill="#f2fff8"/><rect x="3" y="10.4" width="1" height="1" fill="#d8ffe8"/><rect x="6" y="13.2" width="7.8" height="1.3" fill="#f2fff8"/><rect x="3" y="13.4" width="1" height="1" fill="#d8ffe8"/><rect x="6" y="16.2" width="7.8" height="1.3" fill="#f2fff8"/><rect x="3" y="16.4" width="1" height="1" fill="#d8ffe8"/><rect x="20.4" y="1.6" width="0.8" height="13.6" fill="#7fe0b8"/><rect x="16.6" y="5" width="14" height="0.8" fill="#7fe0b8"/><rect x="22.4" y="1.6" width="0.8" height="13.6" fill="#7fe0b8"/><rect x="16.6" y="7" width="14" height="0.8" fill="#7fe0b8"/><rect x="24.4" y="1.6" width="0.8" height="13.6" fill="#7fe0b8"/><rect x="16.6" y="9" width="14" height="0.8" fill="#7fe0b8"/><rect x="26.4" y="1.6" width="0.8" height="13.6" fill="#7fe0b8"/><rect x="16.6" y="11" width="14" height="0.8" fill="#7fe0b8"/><rect x="18.8" y="4" width="9.5" height="8.9" fill="url(#cg4)" stroke="#b8ccc4" stroke-width="0.6"/><rect x="16.3" y="18.4" width="1.8" height="4.4" fill="#f6f66c"/><rect x="19.2" y="18.4" width="1.8" height="4.4" fill="#f6f66c"/><rect x="22.1" y="18.4" width="1.8" height="4.4" fill="#f6f66c"/><rect x="25.0" y="18.4" width="1.8" height="4.4" fill="#f6f66c"/><rect x="27.9" y="18.4" width="1.8" height="4.4" fill="#f6f66c"/></svg>
<div style="position:absolute;left:116.0px;top:374.6px;font-size:15.8px;line-height:21px;letter-spacing:0.00px;color:#ffffff;white-space:pre;width:89.2px;overflow:hidden;letter-spacing:-0.04px;">PCB2.PcbDo</div>
<svg style="position:absolute;left:210px;top:378px" width="18" height="21" viewBox="0 0 17 20.5"><path d="M1.2 1.2 H9.5 L15.8 7.5 V19.3 H1.2 Z M9.5 1.2 V7.5 H15.8" fill="none" stroke="#f06868" stroke-width="2"/></svg>
<div style="position:absolute;left:285px;top:119px;width:2227px;height:1346px;background:#6e6a69"></div>
<svg style="position:absolute;left:285px;top:119px" width="2227" height="1346" viewBox="285 119 2227 1346" fill="none">
<text y="232.6" font-family="'Liberation Mono',monospace" font-size="56" fill="#830683" stroke="#6e6a69" stroke-width="2.9" stroke-linejoin="round"><tspan x="1229.9">2</tspan><tspan x="1263.4">3</tspan><tspan x="1296.9">6</tspan></text>
<text y="295.8" font-family="'Liberation Mono',monospace" font-size="56" fill="#830683" stroke="#6e6a69" stroke-width="2.9" stroke-linejoin="round"><tspan x="1349.9">1</tspan><tspan x="1381.4">9</tspan><tspan x="1414.8" font-family="'Liberation Sans',sans-serif" font-size="53.7">0</tspan></text>
<text y="359.7" font-family="'Liberation Mono',monospace" font-size="56" fill="#830683" stroke="#6e6a69" stroke-width="2.9" stroke-linejoin="round"><tspan x="1451.9">1</tspan><tspan x="1482.9">5</tspan><tspan x="1513.9">6</tspan></text>
<text y="423.2" font-family="'Liberation Mono',monospace" font-size="56" fill="#830683" stroke="#6e6a69" stroke-width="2.9" stroke-linejoin="round"><tspan x="1601.2">1</tspan><tspan x="1632.1">2</tspan><tspan x="1662.9">8</tspan></text>
<text y="487.1" font-family="'Liberation Mono',monospace" font-size="56" fill="#830683" stroke="#6e6a69" stroke-width="2.9" stroke-linejoin="round"><tspan x="1701.7">9</tspan><tspan x="1737.8" font-family="'Liberation Sans',sans-serif" font-size="53.7">0</tspan></text>
<text y="550.9" font-family="'Liberation Mono',monospace" font-size="56" fill="#830683" stroke="#6e6a69" stroke-width="2.9" stroke-linejoin="round"><tspan x="1811.3">6</tspan><tspan x="1845.3">6</tspan></text>
<text y="979.3" font-family="'Liberation Mono',monospace" font-size="56" fill="#830683" stroke="#6e6a69" stroke-width="2.9" stroke-linejoin="round"><tspan x="330.6">1</tspan><tspan x="363.9" font-family="'Liberation Sans',sans-serif" font-size="53.7">0</tspan><tspan x="393.4">8</tspan></text>
<text y="875.2" font-family="'Liberation Mono',monospace" font-size="56" fill="#830683" stroke="#6e6a69" stroke-width="2.9" stroke-linejoin="round"><tspan x="407.7">9</tspan><tspan x="443.6" font-family="'Liberation Sans',sans-serif" font-size="53.7">0</tspan></text>
<text y="1085.3" font-family="'Liberation Mono',monospace" font-size="56" fill="#830683" stroke="#6e6a69" stroke-width="2.9" stroke-linejoin="round"><tspan x="471.6">5</tspan><tspan x="504.9">5</tspan></text>
<text y="1293.7" font-family="'Liberation Mono',monospace" font-size="56" fill="#830683" stroke="#6e6a69" stroke-width="2.9" stroke-linejoin="round"><tspan x="598.9">1</tspan><tspan x="626.9">5</tspan></text>
<text y="1128.4" font-family="'Liberation Mono',monospace" font-size="56" fill="#830683" stroke="#6e6a69" stroke-width="2.9" stroke-linejoin="round"><tspan x="567.2">4</tspan><tspan x="601.1">6</tspan></text>
<text x="633.5" y="1128.6" font-family="'Liberation Mono',monospace" font-size="62" fill="#830683" stroke="#6e6a69" stroke-width="2.9">,</text>
<text y="1128.4" font-family="'Liberation Mono',monospace" font-size="56" fill="#830683" stroke="#6e6a69" stroke-width="2.9" stroke-linejoin="round"><tspan x="669.4">5</tspan><tspan x="704.8" font-family="'Liberation Sans',sans-serif" font-size="53.7">0</tspan></text>
<path d="M763.3 247.5 L1220.7 247.5" stroke="#830683" stroke-width="1.3"/>
<path d="M1328.1 247.5 L2016.9 247.5" stroke="#830683" stroke-width="1.3"/>
<polygon points="764.3,247.5 798.3,242.3 798.3,252.7" fill="#830683"/>
<polygon points="2015.9,247.5 1981.9,242.3 1981.9,252.7" fill="#830683"/>
<rect x="1224.0" y="221.7" width="100.8" height="52.1" fill="none" stroke="#830683" stroke-width="1.3"/>
<path d="M1007.7 311.3 L1341.7 311.3" stroke="#830683" stroke-width="1.3"/>
<path d="M1449.5 311.3 L2016.9 311.3" stroke="#830683" stroke-width="1.3"/>
<polygon points="1008.7,311.3 1042.7,306.1 1042.7,316.5" fill="#830683"/>
<polygon points="2015.9,311.3 1981.9,306.1 1981.9,316.5" fill="#830683"/>
<rect x="1345.0" y="285.5" width="101.2" height="52.1" fill="none" stroke="#830683" stroke-width="1.3"/>
<path d="M1188.4 375.1 L1442.9 375.1" stroke="#830683" stroke-width="1.3"/>
<path d="M1550.6 375.1 L2016.9 375.1" stroke="#830683" stroke-width="1.3"/>
<polygon points="1189.4,375.1 1223.4,369.9 1223.4,380.3" fill="#830683"/>
<polygon points="2015.9,375.1 1981.9,369.9 1981.9,380.3" fill="#830683"/>
<rect x="1446.2" y="349.3" width="101.1" height="52.1" fill="none" stroke="#830683" stroke-width="1.3"/>
<path d="M1337.0 439.0 L1592.0 439.0" stroke="#830683" stroke-width="1.3"/>
<path d="M1699.3 439.0 L2016.9 439.0" stroke="#830683" stroke-width="1.3"/>
<polygon points="1338.0,439.0 1372.0,433.8 1372.0,444.2" fill="#830683"/>
<polygon points="2015.9,439.0 1981.9,433.8 1981.9,444.2" fill="#830683"/>
<rect x="1595.3" y="413.2" width="100.7" height="52.1" fill="none" stroke="#830683" stroke-width="1.3"/>
<path d="M1538.9 502.9 L1692.5 502.9" stroke="#830683" stroke-width="1.3"/>
<path d="M1774.3 502.9 L2016.9 502.9" stroke="#830683" stroke-width="1.3"/>
<polygon points="1539.9,502.9 1573.9,497.7 1573.9,508.1" fill="#830683"/>
<polygon points="2015.9,502.9 1981.9,497.7 1981.9,508.1" fill="#830683"/>
<rect x="1695.8" y="477.1" width="75.2" height="52.1" fill="none" stroke="#830683" stroke-width="1.3"/>
<path d="M1666.4 566.5 L1802.0 566.5" stroke="#830683" stroke-width="1.3"/>
<path d="M1883.8 566.5 L2016.9 566.5" stroke="#830683" stroke-width="1.3"/>
<polygon points="1667.4,566.5 1701.4,561.3 1701.4,571.7" fill="#830683"/>
<polygon points="2015.9,566.5 1981.9,561.3 1981.9,571.7" fill="#830683"/>
<rect x="1805.3" y="540.7" width="75.2" height="52.1" fill="none" stroke="#830683" stroke-width="1.3"/>
<path d="M763.3 213.5 L763.3 1311.7" stroke="#830683" stroke-width="1.3"/>
<path d="M1188.4 341.0 L1188.4 1311.7" stroke="#830683" stroke-width="1.3"/>
<path d="M1538.9 468.5 L1538.9 1311.7" stroke="#830683" stroke-width="1.3"/>
<path d="M1007.7 277.3 L1007.7 657.8" stroke="#830683" stroke-width="1.3"/>
<rect x="1006.9" y="671.7" width="1.6" height="1.6" fill="#830683"/>
<path d="M1007.7 685.0 L1007.7 714.0" stroke="#830683" stroke-width="1.3"/>
<rect x="1006.9" y="725.7" width="1.6" height="1.6" fill="#830683"/>
<path d="M1337.0 404.6 L1337.0 657.8" stroke="#830683" stroke-width="1.3"/>
<rect x="1336.2" y="671.7" width="1.6" height="1.6" fill="#830683"/>
<path d="M1337.0 685.0 L1337.0 714.0" stroke="#830683" stroke-width="1.3"/>
<rect x="1336.2" y="725.7" width="1.6" height="1.6" fill="#830683"/>
<path d="M1666.4 532.3 L1666.4 657.8" stroke="#830683" stroke-width="1.3"/>
<rect x="1665.6" y="671.7" width="1.6" height="1.6" fill="#830683"/>
<path d="M1666.4 685.0 L1666.4 714.0" stroke="#830683" stroke-width="1.3"/>
<rect x="1665.6" y="725.7" width="1.6" height="1.6" fill="#830683"/>
<path d="M2016.9 213.4 L2016.9 1235.3" stroke="#7d007d" stroke-width="2"/>
<path d="M2016.9 1247.8 L2016.9 1297.5" stroke="#830683" stroke-width="1.3"/>
<rect x="2016.1" y="1324.2" width="1.6" height="1.6" fill="#830683"/>
<path d="M2016.9 1338.0 L2016.9 1367.0" stroke="#830683" stroke-width="1.3"/>
<rect x="2016.1" y="1379.2" width="1.6" height="1.6" fill="#830683"/>
<path d="M2016.9 1393.0 L2016.9 1465.0" stroke="#830683" stroke-width="1.3"/>
<rect x="762.5" y="1324.2" width="1.6" height="1.6" fill="#830683"/>
<path d="M763.3 1338.0 L763.3 1367.0" stroke="#830683" stroke-width="1.3"/>
<rect x="762.5" y="1379.2" width="1.6" height="1.6" fill="#830683"/>
<rect x="1187.6" y="1324.2" width="1.6" height="1.6" fill="#830683"/>
<path d="M1188.4 1338.0 L1188.4 1367.0" stroke="#830683" stroke-width="1.3"/>
<rect x="1187.6" y="1379.2" width="1.6" height="1.6" fill="#830683"/>
<rect x="1538.1" y="1324.2" width="1.6" height="1.6" fill="#830683"/>
<path d="M1538.9 1338.0 L1538.9 1367.0" stroke="#830683" stroke-width="1.3"/>
<rect x="1538.1" y="1379.2" width="1.6" height="1.6" fill="#830683"/>
<path d="M341.2 699.2 L763.3 699.2" stroke="#830683" stroke-width="1.3"/>
<path d="M405.3 794.7 L749.0 794.7" stroke="#830683" stroke-width="1.3"/>
<path d="M469.2 980.4 L1976.4 980.4" stroke="#830683" stroke-width="1.3"/>
<path d="M596.3 1025.8 L1605.0 1025.8" stroke="#830683" stroke-width="1.3"/>
<path d="M341.2 1272.5 L1979.8 1272.5" stroke="#7d007d" stroke-width="2"/>
<path d="M1979.8 1272.5 L2041.5 1272.5" stroke="#830683" stroke-width="1.3"/>
<path d="M596.6 1352.3 L1976.2 1352.3" stroke="#830683" stroke-width="1.3"/>
<rect x="1989.2" y="1351.5" width="1.6" height="1.6" fill="#830683"/>
<rect x="1989.2" y="979.6" width="1.6" height="1.6" fill="#830683"/>
<path d="M2003.0 1352.3 L2031.0 1352.3" stroke="#830683" stroke-width="1.3"/>
<path d="M2003.0 980.4 L2031.0 980.4" stroke="#830683" stroke-width="1.3"/>
<rect x="2043.2" y="979.6" width="1.6" height="1.6" fill="#830683"/>
<rect x="1618.2" y="1024.7" width="1.6" height="1.6" fill="#830683"/>
<rect x="1591.2" y="1051.9" width="1.6" height="1.6" fill="#830683"/>
<rect x="1564.2" y="1024.7" width="1.6" height="1.6" fill="#830683"/>
<path d="M502.0 1121.5 L846.0 1121.5" stroke="#830683" stroke-width="1.3"/>
<path d="M858.0 1121.5 L904.5 1121.5" stroke="#830683" stroke-width="1.3"/>
<path d="M917.5 1121.5 L943.4 1121.5" stroke="#830683" stroke-width="1.3"/>
<path d="M958.0 1121.5 L1003.4 1121.5" stroke="#830683" stroke-width="1.3"/>
<path d="M930.8 1049.0 L930.8 1102.7" stroke="#830683" stroke-width="1.3"/>
<path d="M930.8 1110.8 L930.8 1133.5" stroke="#830683" stroke-width="1.3"/>
<path d="M930.8 1148.0 L930.8 1193.4" stroke="#830683" stroke-width="1.3"/>
<path d="M930.8 1206.4 L930.8 1465.0" stroke="#830683" stroke-width="1.3"/>
<path d="M375.5 702.0 L375.5 969.0" stroke="#830683" stroke-width="1.3"/>
<path d="M375.5 1021.3 L375.5 1272.0" stroke="#830683" stroke-width="1.3"/>
<path d="M439.5 797.0 L439.5 865.4" stroke="#830683" stroke-width="1.3"/>
<path d="M439.5 917.0 L439.5 1272.0" stroke="#830683" stroke-width="1.3"/>
<path d="M503.3 983.0 L503.3 1075.1" stroke="#830683" stroke-width="1.3"/>
<path d="M503.3 1127.0 L503.3 1272.0" stroke="#830683" stroke-width="1.3"/>
<path d="M536.0 1121.5 L536.0 1465.0" stroke="#830683" stroke-width="1.3"/>
<path d="M630.4 1028.0 L630.4 1118.0" stroke="#830683" stroke-width="1.3"/>
<path d="M630.4 1170.0 L630.4 1272.0" stroke="#830683" stroke-width="1.3"/>
<path d="M630.4 1355.0 L630.4 1420.3" stroke="#830683" stroke-width="1.3"/>
<polygon points="375.5,700.5 370.3,734.5 380.7,734.5" fill="#830683"/>
<polygon points="439.5,796.0 434.3,830.0 444.7,830.0" fill="#830683"/>
<polygon points="503.3,982.0 498.1,1016.0 508.5,1016.0" fill="#830683"/>
<polygon points="630.4,1027.0 625.2,1061.0 635.6,1061.0" fill="#830683"/>
<polygon points="536.0,1123.0 530.8,1157.0 541.2,1157.0" fill="#830683"/>
<polygon points="630.4,1354.0 625.2,1388.0 635.6,1388.0" fill="#830683"/>
<polygon points="375.5,1271.5 370.3,1237.5 380.7,1237.5" fill="#830683"/>
<polygon points="439.5,1271.5 434.3,1237.5 444.7,1237.5" fill="#830683"/>
<polygon points="503.3,1271.5 498.1,1237.5 508.5,1237.5" fill="#830683"/>
<polygon points="536.0,1271.5 530.8,1237.5 541.2,1237.5" fill="#830683"/>
<polygon points="630.4,1271.5 625.2,1237.5 635.6,1237.5" fill="#830683"/>
<rect x="325.3" y="969.0" width="101.1" height="52.3" fill="none" stroke="#830683" stroke-width="1.3"/>
<rect x="401.8" y="865.4" width="75.2" height="51.6" fill="none" stroke="#830683" stroke-width="1.3"/>
<rect x="465.3" y="1075.1" width="75.5" height="51.9" fill="none" stroke="#830683" stroke-width="1.3"/>
<rect x="561.0" y="1117.9" width="140.0" height="52.1" fill="none" stroke="#830683" stroke-width="1.3"/>
<rect x="593.4" y="1283.2" width="75.2" height="51.8" fill="none" stroke="#830683" stroke-width="1.3"/>
<path d="M740.2 786.0 L786.2 803.8" stroke="#830683" stroke-width="1.3"/>
<path d="M772.3 771.7 L754.5 817.7" stroke="#830683" stroke-width="1.3"/>
<path d="M905.5 1144.8 L688.0 1465.0" stroke="#830683" stroke-width="1.3"/>
<path d="M914.3 1177.9 L829.3 1465.0" stroke="#830683" stroke-width="1.3"/>
<polygon points="914.3,1177.9 899.5,1208 909.5,1211" fill="#830683"/>
<rect x="737" y="672.6" width="1307" height="706.5" rx="17" ry="17" stroke="#ea18ea" stroke-width="1.4"/>
<circle cx="763.3" cy="699.3" r="14.3" fill="none" stroke="#ea18ea" stroke-width="1.3"/>
<circle cx="1007.7" cy="699.3" r="14.3" fill="none" stroke="#ea18ea" stroke-width="1.3"/>
<circle cx="1337.0" cy="699.3" r="14.3" fill="none" stroke="#ea18ea" stroke-width="1.3"/>
<circle cx="1666.4" cy="699.3" r="14.3" fill="none" stroke="#ea18ea" stroke-width="1.3"/>
<circle cx="1910.4" cy="699.3" r="14.3" fill="none" stroke="#ea18ea" stroke-width="1.3"/>
<circle cx="2016.9" cy="699.3" r="14.3" fill="none" stroke="#ea18ea" stroke-width="1.3"/>
<circle cx="763.3" cy="795.0" r="14.3" fill="none" stroke="#ea18ea" stroke-width="1.3"/>
<circle cx="763.3" cy="1025.8" r="14.3" fill="none" stroke="#ea18ea" stroke-width="1.3"/>
<circle cx="763.3" cy="1352.3" r="14.3" fill="none" stroke="#ea18ea" stroke-width="1.3"/>
<circle cx="1188.4" cy="1352.3" r="14.3" fill="none" stroke="#ea18ea" stroke-width="1.3"/>
<circle cx="1538.9" cy="1352.3" r="14.3" fill="none" stroke="#ea18ea" stroke-width="1.3"/>
<circle cx="2016.9" cy="1352.3" r="14.3" fill="none" stroke="#ea18ea" stroke-width="1.3"/>
<circle cx="2016.9" cy="980.3" r="14.3" fill="none" stroke="#ea18ea" stroke-width="1.3"/>
<circle cx="2016.9" cy="1272.5" r="11.5" fill="none" stroke="#ea18ea" stroke-width="1.3"/>
<circle cx="1188.3" cy="1025.5" r="14.3" fill="none" stroke="#ea18ea" stroke-width="1.3"/>
<circle cx="1591.9" cy="1025.5" r="14.3" fill="none" stroke="#ea18ea" stroke-width="1.3"/>
<circle cx="930.8" cy="1121.5" r="58.5" fill="none" stroke="#ea18ea" stroke-width="1.5"/>
<path d="M1600.1 1379 Q1607.8 1398 1607.8 1418 V1442 Q1607.8 1447 1611 1449.7 L1626.8 1465 M1607.8 1431.5 L1641.7 1465" stroke="#ea18ea" stroke-width="1.4"/>
<path d="M2043.9 1013.3 H2074.7 Q2080.5 1013.3 2084 1007.5 L2118.5 951.5 Q2120.5 948.5 2127.5 948.5 H2189.2 V1243.5 H2043.9 M2074.7 1013.3 V1243.5 M2085.3 1006 V1243.5 M2128.7 948.5 V1243.5 M2140.4 948.5 V1243.5 M2171.7 948.5 V1243.5" stroke="#ea18ea" stroke-width="1.3"/>
<path d="M2192.0 969.6 V1230.3 M2189.2 969.6 H2217.4 M2189.2 1007.5 H2217.4 M2189.2 1096.2 H2217.4 M2189.2 1104.4 H2217.4 M2189.2 1193.0 H2217.4 M2189.2 1230.3 H2217.4 M2195.0 985.2 H2217.4 M2195.0 993.8 H2217.4 M2195.0 1206.8 H2217.4 M2195.0 1215.8 H2217.4 M2195.0 985.2 V993.8 M2195.0 1206.8 V1215.8 M2194 969.6 L2217.4 947.0 M2194 1230.3 L2217.4 1253.7 M2189.2 1029.6 H2210.2 V1067.7 H2189.2 Z M2205.4 1029.6 V1067.7 M2189.2 1034.1 H2205.4 M2189.2 1039.7 H2205.4 M2189.2 1041.7 H2205.4 M2189.2 1047.8 H2205.4 M2189.2 1049.8 H2205.4 M2189.2 1055.8 H2205.4 M2189.2 1057.9 H2205.4 M2189.2 1065.4 H2205.4 M2205.4 1036.9 H2210.2 M2205.4 1044.8 H2210.2 M2205.4 1052.8 H2210.2 M2205.4 1061.1 H2210.2 M2189.2 1133.4 H2210.2 V1171.5 H2189.2 Z M2205.4 1133.4 V1171.5 M2189.2 1137.9 H2205.4 M2189.2 1143.5 H2205.4 M2189.2 1145.5 H2205.4 M2189.2 1151.6 H2205.4 M2189.2 1153.6 H2205.4 M2189.2 1159.6 H2205.4 M2189.2 1161.7 H2205.4 M2189.2 1169.2 H2205.4 M2205.4 1140.7 H2210.2 M2205.4 1148.6 H2210.2 M2205.4 1156.6 H2210.2 M2205.4 1164.9 H2210.2 M2217.4 947.0 L2220.5 944.2 H2245 L2247.5 946.5 V1253.5 L2245 1255.7 H2220.5 L2217.4 1253.0 Z M2217.4 988.0 H2254.5 M2217.4 1211.9 H2254.5 M2247.5 952.8 H2252.5 L2254.5 955.0 V1245.0 L2252.5 1247.0 H2247.5 M2244.3 946.0 V1254.0 M2250.8 953.0 V1247.0 M2219.9 945.0 V1255.0 M2254.5 1007.5 H2330.0 M2254.5 1036.8 H2330.0 M2254.5 1163.8 H2330.0 M2254.5 1193.0 H2330.0 M2330.0 1007.5 V1193.0 M2285 1007.5 V991.8 H2332.7 V1208.8 H2285 V1193.0 M2285.0 993.0 H2332.7 M2285.0 1207.6 H2332.7 M2254.5 1040.7 H2291 Q2293.6 1040.7 2293.6 1043.2 V1046.0 Q2293.6 1048.5 2291 1048.5 H2254.5 M2254.5 1042.3 H2291.0 M2254.5 1046.9 H2291.0 M2280.0 1040.7 V1048.5 M2287.0 1040.7 V1048.5 M2254.5 1152.0 H2291 Q2293.6 1152.0 2293.6 1154.5 V1157.3 Q2293.6 1159.8 2291 1159.8 H2254.5 M2254.5 1153.6 H2291.0 M2254.5 1158.2 H2291.0 M2280.0 1152.0 V1159.8 M2287.0 1152.0 V1159.8" stroke="#ea18ea" stroke-width="1.3"/>
<path d="M2189.2 1321 L2129.4 1353.4 L2084.5 1389.7 L1975 1443.3 Q1955 1453 1937 1453 H1875.4 M1854 1465 L1972 1398 Q1981.7 1392.5 1981.7 1379 M2072.8 1396 V1465 M2085.3 1389 V1465 M2128.7 1354 V1465 M2142.3 1346.5 V1465 M2171.7 1330.5 V1465 M2189.2 1321 V1465" stroke="#ea18ea" stroke-width="1.3"/>
<path d="M2192.0 1367.6 V1628.3 M2189.2 1367.6 H2217.4 M2189.2 1405.5 H2217.4 M2189.2 1494.2 H2217.4 M2189.2 1502.4 H2217.4 M2189.2 1591.0 H2217.4 M2189.2 1628.3 H2217.4 M2195.0 1383.2 H2217.4 M2195.0 1391.8 H2217.4 M2195.0 1604.8 H2217.4 M2195.0 1613.8 H2217.4 M2195.0 1383.2 V1391.8 M2195.0 1604.8 V1613.8 M2194 1367.6 L2217.4 1345.0 M2194 1628.3 L2217.4 1651.7 M2189.2 1427.6 H2210.2 V1465.7 H2189.2 Z M2205.4 1427.6 V1465.7 M2189.2 1432.1 H2205.4 M2189.2 1437.7 H2205.4 M2189.2 1439.7 H2205.4 M2189.2 1445.8 H2205.4 M2189.2 1447.8 H2205.4 M2189.2 1453.8 H2205.4 M2189.2 1455.9 H2205.4 M2189.2 1463.4 H2205.4 M2205.4 1434.9 H2210.2 M2205.4 1442.8 H2210.2 M2205.4 1450.8 H2210.2 M2205.4 1459.1 H2210.2 M2189.2 1531.4 H2210.2 V1569.5 H2189.2 Z M2205.4 1531.4 V1569.5 M2189.2 1535.9 H2205.4 M2189.2 1541.5 H2205.4 M2189.2 1543.5 H2205.4 M2189.2 1549.6 H2205.4 M2189.2 1551.6 H2205.4 M2189.2 1557.6 H2205.4 M2189.2 1559.7 H2205.4 M2189.2 1567.2 H2205.4 M2205.4 1538.7 H2210.2 M2205.4 1546.6 H2210.2 M2205.4 1554.6 H2210.2 M2205.4 1562.9 H2210.2 M2217.4 1345.0 L2220.5 1342.2 H2245 L2247.5 1344.5 V1651.5 L2245 1653.7 H2220.5 L2217.4 1651.0 Z M2217.4 1386.0 H2254.5 M2217.4 1609.9 H2254.5 M2247.5 1350.8 H2252.5 L2254.5 1353.0 V1643.0 L2252.5 1645.0 H2247.5 M2244.3 1344.0 V1652.0 M2250.8 1351.0 V1645.0 M2219.9 1343.0 V1653.0 M2254.5 1405.5 H2330.0 M2254.5 1434.8 H2330.0 M2254.5 1561.8 H2330.0 M2254.5 1591.0 H2330.0 M2330.0 1405.5 V1591.0 M2285 1405.5 V1389.8 H2332.7 V1606.8 H2285 V1591.0 M2285.0 1391.0 H2332.7 M2285.0 1605.6 H2332.7 M2254.5 1438.7 H2291 Q2293.6 1438.7 2293.6 1441.2 V1444.0 Q2293.6 1446.5 2291 1446.5 H2254.5 M2254.5 1440.3 H2291.0 M2254.5 1444.9 H2291.0 M2280.0 1438.7 V1446.5 M2287.0 1438.7 V1446.5 M2254.5 1550.0 H2291 Q2293.6 1550.0 2293.6 1552.5 V1555.3 Q2293.6 1557.8 2291 1557.8 H2254.5 M2254.5 1551.6 H2291.0 M2254.5 1556.2 H2291.0 M2280.0 1550.0 V1557.8 M2287.0 1550.0 V1557.8" stroke="#ea18ea" stroke-width="1.3"/>
<path d="M763.3 699.4 H1968" stroke="#5fe0e6" stroke-width="1.4"/>
<path d="M1967 699.4 H2067 M2016.9 649 V749" stroke="#2ee02e" stroke-width="1.3"/><circle cx="2016.9" cy="699.4" r="7" stroke="#2ee02e" stroke-width="1.2"/>
<rect x="1316" y="689" width="149" height="21" fill="#ffff00"/><rect x="1322.4" y="689" width="136.2" height="21" fill="#00ffff"/>
<text x="1329" y="708" font-family="'Liberation Sans',sans-serif" font-weight="700" font-size="17.5" letter-spacing="-0.23" fill="#000">X : 9291.338mil</text>
<rect x="1203.2" y="193.9" width="140.6" height="44" rx="2.6" stroke="#fd1f12" stroke-width="5.2"/>
</svg>
<div style="position:absolute;left:1041px;top:124px;width:714px;height:50px;background:#3d3d3d;border-radius:11px"></div>
<svg style="position:absolute;left:1041px;top:124px" width="714" height="50" viewBox="1041 124 714 50" fill="none"><path d="M1194 162.8 V170.8 H1185.7 Z" fill="#f8f8f8"/><path d="M1244 162.8 V170.8 H1235.7 Z" fill="#f8f8f8"/><path d="M1294 162.8 V170.8 H1285.7 Z" fill="#f8f8f8"/><path d="M1345 162.8 V170.8 H1336.7 Z" fill="#f8f8f8"/><path d="M1395 162.8 V170.8 H1386.7 Z" fill="#f8f8f8"/><path d="M1446 162.8 V170.8 H1437.7 Z" fill="#f8f8f8"/><path d="M1496 162.8 V170.8 H1487.7 Z" fill="#f8f8f8"/><path d="M1546 162.8 V170.8 H1537.7 Z" fill="#f8f8f8"/><path d="M1597 162.8 V170.8 H1588.7 Z" fill="#f8f8f8"/><path d="M1647 162.8 V170.8 H1638.7 Z" fill="#f8f8f8"/><path d="M1697 162.8 V170.8 H1688.7 Z" fill="#f8f8f8"/><path d="M1747 162.8 V170.8 H1738.7 Z" fill="#f8f8f8"/><path d="M1058.5 137.5 H1083.5 L1075 148 V158 H1067 V148 Z" fill="#c8e4ee" stroke="#7eb0cc" stroke-width="1.4"/><rect x="1106" y="137.4" width="5.6" height="5.2" rx="1.8" fill="#9dbcbc"/><rect x="1106" y="145.9" width="5.6" height="5.2" rx="1.8" fill="#9dbcbc"/><rect x="1106" y="154.4" width="5.6" height="5.2" rx="1.8" fill="#9dbcbc"/><path d="M1115.5 141.7 H1126 A7.2 7.2 0 0 1 1133.2 148.8" stroke="#6a8ee0" stroke-width="4.6"/><path d="M1133.2 148.3 A7.2 7.2 0 0 1 1126 156 H1115.5" stroke="#f0909c" stroke-width="4.6"/><path d="M1171 137 V160 M1159.5 148.5 H1182.5" stroke="#6f97ea" stroke-width="1.5"/><path d="M1171 135.3 L1167.7 139.8 H1174.3 Z M1171 161.5 L1167.7 157 H1174.3 Z M1157.8 148.5 L1162.3 145.2 V151.8 Z M1184 148.5 L1179.5 145.2 V151.8 Z" fill="#6f97ea"/><rect x="1209.4" y="136.4" width="25.6" height="25.2" stroke="#7394ec" stroke-width="2.2" stroke-dasharray="4.6 2.4"/><rect x="1260.6" y="144" width="5.2" height="10.5" fill="#f4b0b0" stroke="#e87878" stroke-width="1.2"/><rect x="1279" y="144" width="5.2" height="10.5" fill="#f4b0b0" stroke="#e87878" stroke-width="1.2"/><rect x="1269.2" y="137.6" width="6.6" height="17" fill="#c4e6f4" stroke="#78b4dc" stroke-width="1.2"/><rect x="1260" y="157.2" width="24.6" height="3.2" fill="#78a0e8"/><rect x="1298" y="133" width="1" height="32" fill="#222"/><rect x="1312.3" y="133.4" width="1.7" height="30" fill="#a8c0cc"/><rect x="1308.2" y="137.4" width="30" height="1.7" fill="#a8c0cc"/><rect x="1315.8999999999999" y="133.4" width="1.7" height="30" fill="#a8c0cc"/><rect x="1308.2" y="141.0" width="30" height="1.7" fill="#a8c0cc"/><rect x="1319.5" y="133.4" width="1.7" height="30" fill="#a8c0cc"/><rect x="1308.2" y="144.6" width="30" height="1.7" fill="#a8c0cc"/><rect x="1323.1" y="133.4" width="1.7" height="30" fill="#a8c0cc"/><rect x="1308.2" y="148.20000000000002" width="30" height="1.7" fill="#a8c0cc"/><rect x="1326.7" y="133.4" width="1.7" height="30" fill="#a8c0cc"/><rect x="1308.2" y="151.8" width="30" height="1.7" fill="#a8c0cc"/><rect x="1330.3" y="133.4" width="1.7" height="30" fill="#a8c0cc"/><rect x="1308.2" y="155.4" width="30" height="1.7" fill="#a8c0cc"/><rect x="1312" y="137" width="22.5" height="22.5" fill="#a8c0cc"/><rect x="1314.5" y="139.5" width="17.5" height="17.5" fill="#d4dadc"/><path d="M1361.7 161.2 L1382.6 140.5" stroke="#6a8ec8" stroke-width="2.8"/><path d="M1360 152 V139.6 H1371" stroke="#e8a820" stroke-width="1.8"/><path d="M1369.5 134.8 L1376.5 139.6 L1369.5 144.4 Z" fill="#e8a820"/><circle cx="1384" cy="139.2" r="3.8" fill="#3d3d3d" stroke="#e8a820" stroke-width="1.7"/><circle cx="1362.6" cy="160.3" r="3.8" fill="#3d3d3d" stroke="#e8a820" stroke-width="1.7"/><path d="M1412 152.5 V146 A4.6 4.6 0 0 1 1421.2 146 V149.2 A3.6 3.6 0 0 0 1428.4 149.2 V146 A4.6 4.6 0 0 1 1437.6 146 V152.5" stroke="#6a8ec8" stroke-width="3.6"/><circle cx="1412" cy="155.2" r="3.2" fill="#3d3d3d" stroke="#e8a820" stroke-width="1.5"/><circle cx="1436.2" cy="155.2" r="3.2" fill="#3d3d3d" stroke="#e8a820" stroke-width="1.5"/><rect x="1466" y="154" width="8" height="11" fill="#f0a848" stroke="#c87818" stroke-width="1"/><rect x="1480" y="141.3" width="10" height="7.4" fill="#38a818"/><rect x="1482" y="143.5" width="8" height="2" fill="#b8e8a0"/><circle cx="1470" cy="145" r="9" fill="none" stroke="#f2c800" stroke-width="5.4"/><circle cx="1470" cy="145" r="11.6" stroke="#a88c00" stroke-width="1"/><circle cx="1470" cy="145" r="3.2" fill="#3d3d3d" stroke="#a88c00" stroke-width="1"/><path d="M1509 160 V147.5 H1521.5 V138 H1539 V160 Z" fill="#c4e2ec" stroke="#6e9cd0" stroke-width="1.8"/><rect x="1559" y="134" width="30.5" height="30.5" stroke="#7c7c7c" stroke-width="1.8"/><path d="M1569.5 153.5 L1580 143" stroke="#7c7c7c" stroke-width="1.8"/><circle cx="1567.5" cy="155.3" r="3.2" stroke="#7c7c7c" stroke-width="1.4"/><circle cx="1581.8" cy="141.2" r="3.2" stroke="#7c7c7c" stroke-width="1.4"/><path d="M1612 140 V161 H1637 V140" stroke="#6e94d0" stroke-width="2.8"/><circle cx="1612" cy="137.3" r="3.1" fill="#3d3d3d" stroke="#e8a820" stroke-width="1.4"/><circle cx="1636" cy="137.3" r="3.1" fill="#3d3d3d" stroke="#e8a820" stroke-width="1.4"/><text transform="translate(1615.2 156.3) scale(0.74 1)" font-family="'Liberation Sans',sans-serif" font-size="18" fill="#e4e4e4">10</text><text x="1659.2" y="162.6" font-family="'Liberation Serif',serif" font-weight="700" font-size="40" fill="#5c9ee4" textLength="29.5" lengthAdjust="spacingAndGlyphs">A</text><path d="M1711.5 161.5 L1737.5 136.5" stroke="#5c9ee4" stroke-width="3.2"/></svg>
<div style="position:absolute;left:1046px;top:731px;width:557px;height:298px;background:#4f4f4f;border:1.5px solid #262626;box-sizing:border-box"></div>
<div style="position:absolute;left:1538px;top:732px;width:54px;height:33px;background:#a00000"></div>
<svg style="position:absolute;left:1557px;top:739px" width="16" height="16" viewBox="0 0 16 16"><path d="M2 2 L14 14 M14 2 L2 14" stroke="#fff" stroke-width="1.8"/></svg>
<div style="position:absolute;left:1214.6px;top:740.9px;font-size:19.6px;line-height:25px;letter-spacing:-0.21px;color:#f0f0f0;white-space:pre;">Measure Distance</div>
<div style="position:absolute;left:1057px;top:776px;width:535px;height:192px;background:#3f3f3f;border:1.5px solid #363636;box-sizing:border-box"></div>
<div style="position:absolute;left:1081.3px;top:801px;width:45.8px;height:45.8px;border-radius:50%;background:#3a80c9"></div>
<div style="position:absolute;left:1084.3px;top:801px;width:40px;height:46px;text-align:center;font-weight:700;font-size:34.6px;line-height:46px;color:#fff">i</div>
<div style="position:absolute;left:1152.6px;top:799.8px;font-size:19.6px;line-height:25px;letter-spacing:0.04px;color:#ececec;white-space:pre;">Distance = 9291.339mil (236mm)</div>
<div style="position:absolute;left:1166.6px;top:847.9px;font-size:19.6px;line-height:25px;letter-spacing:0.02px;color:#ececec;white-space:pre;">X Distance = 9291.339mil (236mm)</div>
<div style="position:absolute;left:1166.6px;top:871.5px;font-size:19.6px;line-height:25px;letter-spacing:-0.00px;color:#ececec;white-space:pre;">Y Distance = 0mil (0mm)</div>
<div style="position:absolute;left:1152.6px;top:920.1px;font-size:19.6px;line-height:25px;letter-spacing:-0.28px;color:#ececec;white-space:pre;">Press Shift+C to clear previous measurements</div>
<div style="position:absolute;left:1479px;top:979px;width:113px;height:38px;background:#4f4f4f;border:2px solid #a6cdf3;box-sizing:border-box;border-radius:6px"></div>
<div style="position:absolute;left:1520.6px;top:986.8px;font-size:19.6px;line-height:25px;letter-spacing:0.43px;color:#f4f4f4;white-space:pre;">OK</div>
<div style="position:absolute;left:1123px;top:781px;width:348.5px;height:58.6px;border:4.8px solid #fb2010;box-sizing:border-box;border-radius:6px"></div>
<svg style="position:absolute;left:1100px;top:230px" width="200" height="560" viewBox="1100 230 200 560"><polygon points="1220.8,249.3 1228.9,267.7 1223.2,264.2 1161.7,752 1160.7,752 1215.2,263.4 1208.7,265.8" fill="#fb2010"/></svg>
<div style="position:absolute;left:2512px;top:76px;width:47px;height:1427px;background:#363636"></div>
<div style="position:absolute;left:2518px;top:82px;width:36px;height:1416px;background:#404040"></div>
<div style="position:absolute;left:2521.5px;top:83px;width:30px;height:119px;background:#4f4f4f;border:1.5px solid #262626;box-sizing:border-box;border-radius:6px"></div><div style="position:absolute;left:2385.7px;top:130.5px;width:300px;height:24px;line-height:24px;text-align:center;font-size:17.2px;letter-spacing:-0.06px;color:#ececec;transform:rotate(90deg);transform-origin:50% 50%;white-space:pre">Components</div>
<div style="position:absolute;left:2521.5px;top:205.6px;width:30px;height:103.79999999999998px;background:#4f4f4f;border:1.5px solid #262626;box-sizing:border-box;border-radius:6px"></div><div style="position:absolute;left:2385.7px;top:245.5px;width:300px;height:24px;line-height:24px;text-align:center;font-size:17.2px;letter-spacing:-0.02px;color:#ececec;transform:rotate(90deg);transform-origin:50% 50%;white-space:pre">Comments</div>
<div style="position:absolute;left:2521.5px;top:312.6px;width:30px;height:97.89999999999998px;background:#4f4f4f;border:1.5px solid #262626;box-sizing:border-box;border-radius:6px"></div><div style="position:absolute;left:2385.7px;top:349.55px;width:300px;height:24px;line-height:24px;text-align:center;font-size:17.2px;letter-spacing:-0.27px;color:#ececec;transform:rotate(90deg);transform-origin:50% 50%;white-space:pre">Properties</div>
<div style="position:absolute;left:0;top:1465px;width:2512px;height:39px;background:#353535"></div>
<div style="position:absolute;left:0;top:1503px;width:2559px;height:36px;background:#3d3d3d"></div>
<div style="position:absolute;left:6.7px;top:1465.7px;width:62.6px;height:30.7px;background:#555555;border:1.5px solid #272727;box-sizing:border-box;border-radius:7px"></div><div style="position:absolute;left:37.3px;top:1471.2px;width:1.5px;height:20.2px;background:#262626"></div><svg style="position:absolute;left:6.7px;top:1465.7px" width="62.6" height="30.7" viewBox="0 0 62.6 30.7"><path d="M17.4 9.9 V20.9 L11.2 15.4 Z" fill="#8c8c8c"/><path d="M43.9 9.8 V21.0 L50.3 15.4 Z" fill="#fafafa"/></svg>
<div style="position:absolute;left:74px;top:1465px;width:79.5px;height:31px;background:#4a4a4a;border:1.5px solid #282828;border-top:none;box-sizing:border-box;border-radius:0 0 6px 6px"></div><div style="position:absolute;left:83.1px;top:1470.9px;font-size:16.9px;line-height:22px;letter-spacing:0.15px;color:#e8e8e8;white-space:pre;">Projects</div>
<div style="position:absolute;left:155.5px;top:1465px;width:94.5px;height:31px;background:#363636;border:1.5px solid #282828;border-top:none;box-sizing:border-box;border-radius:0 0 6px 6px"></div><div style="position:absolute;left:164.0px;top:1470.9px;font-size:16.9px;line-height:22px;letter-spacing:0.57px;color:#e8e8e8;white-space:pre;">Navigator</div>
<div style="position:absolute;left:251.5px;top:1465px;width:29px;height:31px;background:#363636;border:1.5px solid #282828;border-top:none;border-right:none;box-sizing:border-box;border-radius:0 0 0 6px"></div>
<div style="position:absolute;left:261.7px;top:1470.9px;font-size:16.9px;line-height:22px;letter-spacing:0.00px;color:#e8e8e8;white-space:pre;width:18.3px;overflow:hidden;letter-spacing:-0.2px;">PC</div>
<div style="position:absolute;left:327px;top:1470px;width:31.5px;height:21px;background:#555555;border:1.3px solid #272727;border-left:none;box-sizing:border-box;border-radius:0 6px 6px 0"></div>
<div style="position:absolute;left:289.6px;top:1470px;width:38.4px;height:21px;background:#800080;border:1.3px solid #2a2a2a;box-sizing:border-box"></div>
<div style="position:absolute;left:334.1px;top:1471.5px;font-size:16.9px;line-height:22px;letter-spacing:-3.41px;color:#f0f0f0;white-space:pre;">LS</div>
<div style="position:absolute;left:363.7px;top:1467px;width:62.4px;height:30.3px;background:#555555;border:1.5px solid #272727;box-sizing:border-box;border-radius:7px"></div><div style="position:absolute;left:394.2px;top:1472.5px;width:1.5px;height:19.8px;background:#262626"></div><svg style="position:absolute;left:363.7px;top:1467px" width="62.4" height="30.3" viewBox="0 0 62.4 30.3"><path d="M17.3 9.6 V20.6 L11.1 15.1 Z" fill="#8c8c8c"/><path d="M43.8 9.5 V20.7 L50.2 15.1 Z" fill="#fafafa"/></svg>
<div style="position:absolute;left:431px;top:1465px;width:143.2px;height:32.6px;background:#343434;border:1px solid #242424;border-top:none;box-sizing:border-box;border-radius:0 0 6px 6px"></div>
<div style="position:absolute;left:440.8px;top:1474px;width:15.4px;height:15.2px;background:#ff0000;border:1px solid #9aa29c;box-sizing:border-box"></div>
<div style="position:absolute;left:468.5px;top:1471.5px;font-size:16.9px;line-height:22px;letter-spacing:-0.02px;color:#e8e8e8;white-space:pre;">[1] Top Layer</div>
<div style="position:absolute;left:576.7px;top:1465px;width:170.7px;height:32.6px;background:#343434;border:1px solid #242424;border-top:none;box-sizing:border-box;border-radius:0 0 6px 6px"></div>
<div style="position:absolute;left:586px;top:1474px;width:15.4px;height:15.2px;background:#0000ff;border:1px solid #9aa29c;box-sizing:border-box"></div>
<div style="position:absolute;left:612.0px;top:1471.5px;font-size:16.9px;line-height:22px;letter-spacing:0.23px;color:#e8e8e8;white-space:pre;">[2] Bottom Layer</div>
<div style="position:absolute;left:748.7px;top:1465px;width:146.3px;height:32.6px;background:#343434;border:1px solid #242424;border-top:none;box-sizing:border-box;border-radius:0 0 6px 6px"></div>
<div style="position:absolute;left:759.2px;top:1474px;width:15.4px;height:15.2px;background:#ff00ff;border:1px solid #9aa29c;box-sizing:border-box"></div>
<div style="position:absolute;left:785.1px;top:1471.5px;font-size:16.9px;line-height:22px;letter-spacing:0.20px;color:#e8e8e8;white-space:pre;">Mechanical 1</div>
<div style="position:absolute;left:896.8px;top:1465px;width:148.8px;height:32.6px;background:#4f4f4f;border:1px solid #242424;border-top:none;box-sizing:border-box;border-radius:0 0 6px 6px"></div>
<div style="position:absolute;left:906.2px;top:1474px;width:15.4px;height:15.2px;background:#800080;border:1px solid #9aa29c;box-sizing:border-box"></div>
<div style="position:absolute;left:932.9px;top:1471.5px;font-size:16.9px;line-height:22px;letter-spacing:-0.13px;color:#ffffff;white-space:pre;font-weight:700;">Mechanical 2</div>
<div style="position:absolute;left:1047.7px;top:1465px;width:144.6px;height:32.6px;background:#343434;border:1px solid #242424;border-top:none;box-sizing:border-box;border-radius:0 0 6px 6px"></div>
<div style="position:absolute;left:1057px;top:1474px;width:15.4px;height:15.2px;background:#ff00ff;border:1px solid #9aa29c;box-sizing:border-box"></div>
<div style="position:absolute;left:1083.1px;top:1471.5px;font-size:16.9px;line-height:22px;letter-spacing:0.19px;color:#e8e8e8;white-space:pre;">Mechanical 5</div>
<div style="position:absolute;left:1194px;top:1465px;width:136.6px;height:32.6px;background:#343434;border:1px solid #242424;border-top:none;box-sizing:border-box;border-radius:0 0 6px 6px"></div>
<div style="position:absolute;left:1204px;top:1474px;width:15.4px;height:15.2px;background:#ffff00;border:1px solid #9aa29c;box-sizing:border-box"></div>
<div style="position:absolute;left:1230.8px;top:1471.5px;font-size:16.9px;line-height:22px;letter-spacing:0.14px;color:#e8e8e8;white-space:pre;">Top Overlay</div>
<div style="position:absolute;left:1332.4px;top:1465px;width:163.7px;height:32.6px;background:#343434;border:1px solid #242424;border-top:none;box-sizing:border-box;border-radius:0 0 6px 6px"></div>
<div style="position:absolute;left:1342px;top:1474px;width:15.4px;height:15.2px;background:#808000;border:1px solid #9aa29c;box-sizing:border-box"></div>
<div style="position:absolute;left:1368.1px;top:1471.5px;font-size:16.9px;line-height:22px;letter-spacing:0.35px;color:#e8e8e8;white-space:pre;">Bottom Overlay</div>
<div style="position:absolute;left:1498.6px;top:1465px;width:119.4px;height:32.6px;background:#343434;border:1px solid #242424;border-top:none;box-sizing:border-box;border-radius:0 0 6px 6px"></div>
<div style="position:absolute;left:1507.7px;top:1474px;width:15.4px;height:15.2px;background:#808080;border:1px solid #9aa29c;box-sizing:border-box"></div>
<div style="position:absolute;left:1536.1px;top:1471.5px;font-size:16.9px;line-height:22px;letter-spacing:-0.19px;color:#e8e8e8;white-space:pre;">Top Paste</div>
<div style="position:absolute;left:1621px;top:1465px;width:147.2px;height:32.6px;background:#343434;border:1px solid #242424;border-top:none;box-sizing:border-box;border-radius:0 0 6px 6px"></div>
<div style="position:absolute;left:1630px;top:1474px;width:15.4px;height:15.2px;background:#800000;border:1px solid #9aa29c;box-sizing:border-box"></div>
<div style="position:absolute;left:1657.1px;top:1471.5px;font-size:16.9px;line-height:22px;letter-spacing:0.20px;color:#e8e8e8;white-space:pre;">Bottom Paste</div>
<div style="position:absolute;left:1770.3px;top:1465px;width:127.5px;height:32.6px;background:#343434;border:1px solid #242424;border-top:none;box-sizing:border-box;border-radius:0 0 6px 6px"></div>
<div style="position:absolute;left:1779.8px;top:1474px;width:15.4px;height:15.2px;background:#800080;border:1px solid #9aa29c;box-sizing:border-box"></div>
<div style="position:absolute;left:1806.8px;top:1471.5px;font-size:16.9px;line-height:22px;letter-spacing:0.12px;color:#e8e8e8;white-space:pre;">Top Solder</div>
<div style="position:absolute;left:1900px;top:1465px;width:154.8px;height:32.6px;background:#343434;border:1px solid #242424;border-top:none;box-sizing:border-box;border-radius:0 0 6px 6px"></div>
<div style="position:absolute;left:1909px;top:1474px;width:15.4px;height:15.2px;background:#ff00ff;border:1px solid #9aa29c;box-sizing:border-box"></div>
<div style="position:absolute;left:1935.2px;top:1471.5px;font-size:16.9px;line-height:22px;letter-spacing:0.39px;color:#e8e8e8;white-space:pre;">Bottom Solder</div>
<div style="position:absolute;left:2057px;top:1465px;width:125.3px;height:32.6px;background:#343434;border:1px solid #242424;border-top:none;box-sizing:border-box;border-radius:0 0 6px 6px"></div>
<div style="position:absolute;left:2066.4px;top:1474px;width:15.4px;height:15.2px;background:#800000;border:1px solid #9aa29c;box-sizing:border-box"></div>
<div style="position:absolute;left:2092.2px;top:1471.5px;font-size:16.9px;line-height:22px;letter-spacing:0.25px;color:#e8e8e8;white-space:pre;">Drill Guide</div>
<div style="position:absolute;left:2184.4px;top:1465px;width:163.9px;height:32.6px;background:#343434;border:1px solid #242424;border-top:none;box-sizing:border-box;border-radius:0 0 6px 6px"></div>
<div style="position:absolute;left:2193px;top:1474px;width:15.4px;height:15.2px;background:#ff00ff;border:1px solid #9aa29c;box-sizing:border-box"></div>
<div style="position:absolute;left:2219.2px;top:1471.5px;font-size:16.9px;line-height:22px;letter-spacing:0.12px;color:#e8e8e8;white-space:pre;">Keep-Out Layer</div>
<div style="position:absolute;left:2350.5px;top:1465px;width:141.5px;height:32.6px;background:#343434;border:1px solid #242424;border-top:none;box-sizing:border-box;border-radius:0 0 6px 6px"></div>
<div style="position:absolute;left:2359.5px;top:1474px;width:15.4px;height:15.2px;background:#ff0032;border:1px solid #9aa29c;box-sizing:border-box"></div>
<div style="position:absolute;left:2385.3px;top:1471.5px;font-size:16.9px;line-height:22px;letter-spacing:0.30px;color:#e8e8e8;white-space:pre;">Drill Drawing</div>
<div style="position:absolute;left:2494.6px;top:1465px;width:17.4px;height:32px;background:#343434;border:1.5px solid #262626;border-top:none;border-right:none;box-sizing:border-box;border-radius:0 0 0 6px"></div>
<div style="position:absolute;left:2504px;top:1474px;width:8px;height:15px;background:#c0c0c0"></div>
<div style="position:absolute;left:6.5px;top:1511.5px;font-size:16.6px;line-height:22px;letter-spacing:-0.06px;color:#e8e8e8;white-space:pre;">X:37630.251mil Y:15236.4mil</div>
<div style="position:absolute;left:238.5px;top:1511.5px;font-size:16.6px;line-height:22px;letter-spacing:0.46px;color:#e8e8e8;white-space:pre;">Grid: 5mil</div>
<div style="position:absolute;left:346.5px;top:1511.5px;font-size:16.6px;line-height:22px;letter-spacing:0.36px;color:#e8e8e8;white-space:pre;">(Hotspot Snap)</div>
<div style="position:absolute;left:648.5px;top:1509px;width:1px;height:27px;background:#333"></div>
<div style="position:absolute;left:655.6px;top:1511.5px;font-size:16.6px;line-height:22px;letter-spacing:0.13px;color:#e8e8e8;white-space:pre;">Select Measure End Point</div>
<div style="position:absolute;left:1297.5px;top:1509px;width:1px;height:27px;background:#333"></div>
<div style="position:absolute;left:1305.0px;top:1511.5px;font-size:16.6px;line-height:22px;letter-spacing:0.09px;color:#e8e8e8;white-space:pre;">Distance:9291.339mil (236mm)</div>
<div style="position:absolute;left:1551.1px;top:1511.5px;font-size:16.6px;line-height:22px;letter-spacing:0.05px;color:#e8e8e8;white-space:pre;">Dx:9291.339mil (236mm)</div>
<div style="position:absolute;left:1752.0px;top:1511.5px;font-size:16.6px;line-height:22px;letter-spacing:0.32px;color:#e8e8e8;white-space:pre;">Dy:0mil (0mm)</div>
<div style="position:absolute;left:2466px;top:1508.5px;width:90px;height:27px;background:#4a4a4a;border:1.5px solid #2a2a2a;box-sizing:border-box;border-radius:6px"></div>
<div style="position:absolute;left:2484.8px;top:1511.5px;font-size:16.6px;line-height:22px;letter-spacing:0.51px;color:#ececec;white-space:pre;">Panels</div>
</body></html>
